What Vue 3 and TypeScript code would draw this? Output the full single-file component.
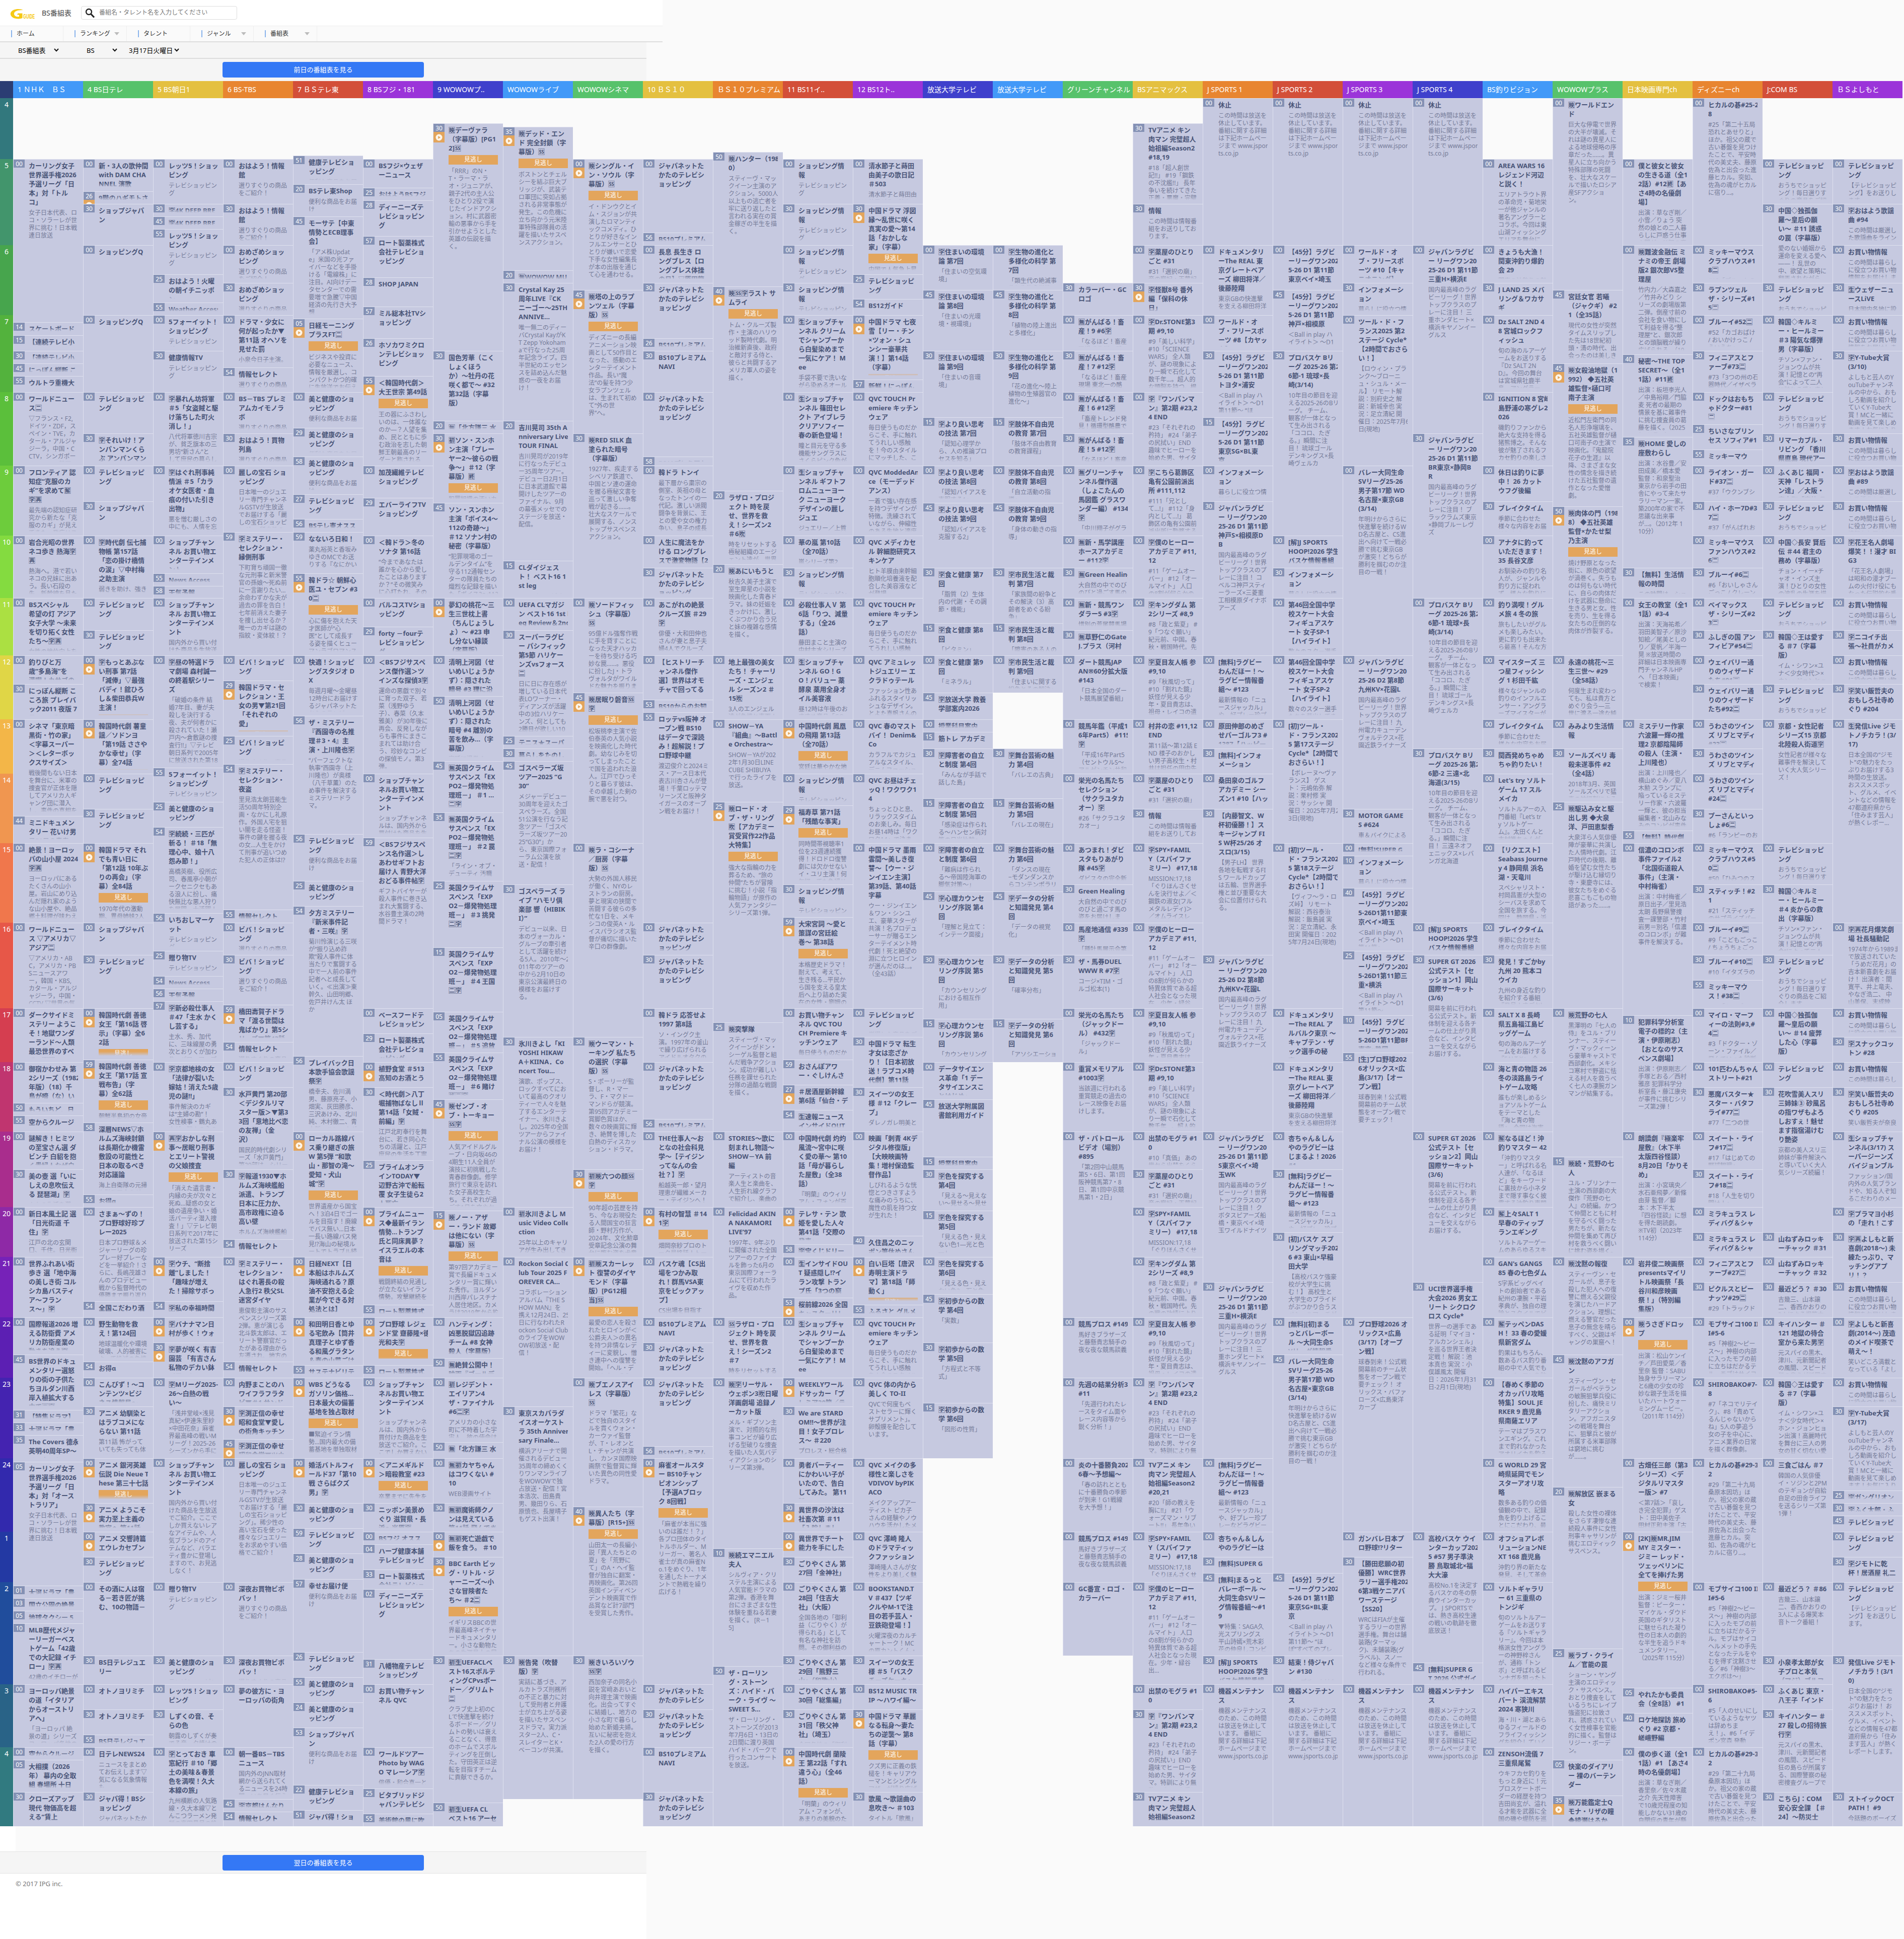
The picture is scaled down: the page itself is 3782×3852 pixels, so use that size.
<script setup lang="ts">
interface Program {
  time: string
  minute: string
  play: boolean
  missed: boolean
  title: string
  desc: string
  height: number
}
interface Channel {
  name: string
  color: string
  programs: Program[]
}

const END = 'end'

// Vertical position of every minute mark on the time axis (shared by all channels).
const axis = `4:00 195 4:30 245 4:35 252 4:50 302 4:51 309
5:00 316 5:20 366 5:25 373 5:26 380 5:28 398 5:30 405 5:45 430 5:55 455 5:56 462 5:57 469
6:00 487 6:20 537 6:25 545 6:28 551 6:30 562 6:40 569 6:45 576 6:54 594 6:55 601 6:57 609
7:00 626 7:05 633 7:14 640 7:15 666 7:26 672 7:30 697 7:40 704 7:45 722 7:54 730 7:55 747 7:57 754
8:00 779 8:15 829 8:20 836 8:25 843 8:29 850 8:30 861 8:35 868 8:55 893 8:58 907
9:00 925 9:20 975 9:27 982 9:29 989 9:30 996 9:45 999 9:50 1006 9:56 1031 9:59 1057
10:00 1064 10:15 1114 10:20 1121 10:30 1128 10:55 1139 10:58 1164
11:00 1188 11:15 1238 11:29 1245 11:30 1252
12:00 1302 12:29 1352 12:30 1359 12:45 1376 12:50 1383 12:53 1390 12:55 1415 12:56 1422
13:00 1429 13:15 1454 13:25 1462 13:30 1487 13:45 1512 13:54 1518 13:55 1525
14:00 1537 14:15 1586 14:25 1593 14:29 1600 14:30 1607 14:35 1614 14:44 1621 14:54 1643 14:55 1650 14:56 1657 14:59 1664
15:00 1675 15:10 1700 15:25 1750 15:30 1757 15:40 1764 15:45 1771 15:54 1800 15:55 1807 15:56 1814 15:59 1822
16:00 1833 16:15 1882 16:25 1889 16:30 1897 16:54 1939 16:55 1947 16:56 1964 16:57 1989 16:59 1996
17:00 2003 17:05 2010 17:10 2017 17:15 2024 17:25 2031 17:29 2053 17:30 2060 17:54 2070 17:55 2091 17:56 2098 17:59 2105
18:00 2110 18:27 2155 18:30 2160 18:45 2184 18:50 2191 18:54 2205 18:55 2216 18:56 2223 18:58 2230
19:00 2248 19:15 2298 19:25 2305 19:30 2323 19:55 2373
20:00 2398 20:15 2405 20:30 2448 20:40 2455 20:54 2462 20:58 2472
21:00 2497 21:30 2547 21:45 2571 21:53 2578 21:54 2585 21:55 2592
22:00 2617 22:30 2667 22:45 2691 22:50 2698 22:54 2705 22:55 2712
23:00 2737 23:15 2787 23:30 2794 23:31 2801 23:33 2826 23:35 2851 23:45 2859 23:50 2865 23:56 2873
24:00 2897 24:05 2904 24:20 2954 24:25 2961 24:30 2986 24:40 2993 24:45 3011 24:59 3036
25:00 3043 25:04 3068 25:10 3076 25:28 3086 25:30 3093 25:33 3118 25:45 3125 25:57 3137
26:00 3143 26:01 3150 26:02 3157 26:03 3175 26:05 3200 26:10 3225 26:25 3275 26:26 3282 26:30 3289 26:31 3296 26:45 3303 26:50 3310 26:55 3332
27:00 3346 27:05 3353 27:24 3382 27:30 3396 27:40 3403 27:53 3432 27:55 3446
28:00 3471 28:05 3496 28:22 3546 28:25 3553 28:30 3560 28:35 3567 28:45 3574 28:50 3581 28:51 3596 28:54 3599 28:55 3603
end 3628`

const marks: Record<string, number> = {}
const tokens = axis.split(/\s+/)
for (let i = 0; i < tokens.length; i += 2) marks[tokens[i]] = Number(tokens[i + 1])

const palette = ['#4299f8', '#57c26b', '#e4c040', '#e88530', '#d34f39', '#9b34d9', '#3f40cc']
const hourColors = [
  '#32787d', '#42956c', '#47a54d', '#53b23d', '#5bbf3b', '#6dcc3c', '#84db40', '#abe042', '#e0d646',
  '#f3b648', '#f09650', '#f0774c', '#e75748', '#d53e50', '#c0356f', '#a92d8d', '#8e29a6', '#7622b8',
  '#5c1fb3', '#4423b0', '#3229ad', '#2339a3', '#204d9c', '#296387', '#317a80',
]
const hours = hourColors.map((color, i) => {
  const from = marks[`${i + 4}:00`]
  const to = i === 24 ? marks[END] : marks[`${i + 5}:00`]
  return { label: i + 4 > 24 ? i - 20 : i + 4, color, height: to - from }
})

// One programme per line: time[flag]~title~description, with ^ as a line break.
// Flag * = play mark, + = play mark and catch-up label, - = no programme.
const SHOP = 'テレビショッピ^ング'
const source: [string, string][] = [
  ['1 ＮＨＫ　ＢＳ', `5:00~カーリング女子^世界選手権2026^予選リーグ「日^本」対「トル^コ」~女子日本代表、ロ^コ・ソラーレが世^界に挑む！日本戦^連日放送
7:14~スケートボード
7:15~【連続テレビ小
7:30~【連続テレビ小
7:45~にっぽん縦断 こ
7:55~ウルトラ重機大
8:00~ワールドニュー^ス🈔~▽フランス・F2,^ドイツ・ZDF，ス^ペイン・TVE，カ^タール・アルジャ^ジーラ，中国・C^CTV，シンガポー^ル・CNA，韓国・
9:00~フロンティア 認^知症“克服のカ^ギ”を求めて🈖^🈑🈞~最先端の認知症研^究から新たな「克^服のカギ」が見え^てきた。発症リス
10:00~岩合光昭の世界^ネコ歩き 熱海🈑^🈞~熱海へ。港で若い^ネコの兄妹に出あ^う。長い石段の^先、新幹線を見た
11:00~BSスペシャル^希望の灯 アジア^女子大学 〜未来^を切り拓く女性^たち〜🈑🈞~女性の地位向上を
12:00~釣りびと万^歳“多島海”を^満喫！カサゴの
12:30~にっぽん縦断 こ^ころ旅 プレイバ^ック2011 夜版 7^月7日の手紙
13:00~シネマ「東京暗^黒街・竹の家」^＜字幕スーパー^＞＜レターボッ^クスサイズ＞~戦後間もない日本^を舞台に、米軍の^捜査官が正体を隠^してアメリカ人ギ^ャング団に潜入^し、事件の真相を
14:44~ミニドキュメン^タリー 花いけ男^子50日の青春
15:00~絶景！ヨーロッ^パの山小屋 2024^🈑🈞~ヨーロッパにある^たくさんの山小^屋。岩山にめり込^んだ隠れ家のよう^な山小屋や、絶品^郷土料理が味わえ
16:00~ワールドニュー^ス ▽アメリカ▽^アジア🈔~▽アメリカ・AB^C，アメリカ・PB^Sニュースアワ^ー，韓国・KBS,^カタール・アルジ^ャジーラ，中国・^CCTV ▽世界の気
17:00~ダークサイドミ^ステリー ようこ^そ！地獄ワンダ^ーランド〜人類^最恐世界のすべ^て〜🈑🈞
18:00~御宿かわせみ 第^2シリーズ（1982^年版）（18）千^鳥が啼（な）い
18:50~もういちど、日
18:55~空からクルージ
19:00~謎解き！ヒミツ^の至宝さん選 ダ^ビンチ 白貂を抱^く貴婦人なぜ白
19:30~美の壺 選「いに^しえの息吹伝え^る 琵琶湖」🈑~人々の生活を潤
20:00~新日本風土記 選^「日光街道 千^住」🈑~江戸の北の玄関^口、千住。日光街
21:00~世界ふれあい街^歩き 選「地中海^の美しき街 コル^シカ島バスティ^ア〜フラン^ス〜」🈑
22:00~国際報道2026 増^える防衛費 アメ^リカ防衛産業の^動きを追う🈑
22:45~BS世界のドキュ^メンタリー選怒^りの街の子供た^ちヨルダン川西^岸入植拡大する^中で🈔🈑
23:31~【特集ドラマ】
23:33~大河ドラマ「豊
23:35~The Covers 德永^英明40周年SP〜^ノーカット
24:05~カーリング女子^世界選手権2026^予選リーグ「日^本」対「オース^トラリア」~女子日本代表、ロ^コ・ソラーレが世^界に挑む！日本戦^連日放送
26:01~大河ドラマ「豊
26:03~国立公園の絶景
26:05~地球タクシー 5
26:10~MLB歴代メジャ^ーリーガーベス^トゲーム「42歳^での大記録 イチ^ロー」🈑🈞~42歳のイチローが
27:00~ヨーロッパ絶景^の道「イタリア^からオーストリ^アへ」~「ヨーロッパ 絶^景の道」シリーズ^ヨーロッパ各地の
28:00~空からクルージ
28:05~大相撲（2026^年） 幕内の全取^組 春場所 十日
28:30~クローズアップ^現代 物価高を超^える“賃上`],
  ['4 BS日テレ', `5:00~新・3人の歌仲間^with DAM CHA^NNEL 演歌
5:26*~9階のハギモトさ
5:30~ショップジャパ^ン
6:00~ショッピングQ
7:00~ショッピングQ
8:00~${SHOP}
8:30~🈑それいけ！ア^ンパンマンくら^ぶ アンパンマン
9:00~${SHOP}
9:30~ショップジャパ^ン
10:00~🈑時代劇 伝七捕^物帳 第157話^「恋の掛け橋情^の涙」▽中村梅^之助主演~弱きを助け、強き
11:00~${SHOP}
11:30~${SHOP}
12:00+~🈑もっとあぶな^い刑事 第7話^「減俸」▽最強^バディ！舘ひろ^し＆柴田恭兵W^主演！
13:00+~韓国時代劇 薯童^謡／ソドンヨ^「第19話 ささや^かな幸せ」（字^幕）全74話
14:00~${SHOP}
14:30~${SHOP}
15:00+~韓国ドラマ それ^でも青い日に^「第12話 10年ぶ^りの再会」（字^幕）全84話~1970年代の激動^期、異母姉妹2人
16:00~ショップジャパ^ン
16:30~${SHOP}
17:00+~韓国時代劇 善徳^女王「第16話 啓^示」（字幕）全6^2話
17:59+~韓国時代劇 善徳^女王「第17話 宣^戦布告」（字^幕）全62話~朝鮮半島初の女帝
18:58~深層NEWS▽ホ^ルムズ海峡封鎖^は長期化か機雷^敷設の可能性と^日本の取るべき^対応議論~海上自衛隊の元掃^海隊群司令らが
19:55~お得α
20:00~さまぁ〜ずの！^プロ野球好珍プ^レー2025~日本プロ野球＆メ^ジャーリーグの珍^プレー好プレーな^どを一挙紹介！さ^らに、長嶋茂雄さ^んのプロデビュー^戦から監督時代の^優勝まで振り返り
21:54~全国こだわり酒
22:00~野生動物を救^え！第124回~地球温暖化や環境^破壊、人的被害に^よって絶滅の危機
22:54~お得α
23:00~こんびず！〜コ^ンテンツ×ビジ^ネス情報局〜
23:30~アニメ 幼馴染と^はラブコメにな^らない 第11話~第11話 怖がって^いても失っても体^が覚えてる
24:00+~アニメ 銀河英雄^伝説 Die Neue T^hese 第三十七話
24:30*~アニメ ようこそ^実力至上主義の^教室へ 第11話
25:00*~アニメ 交響詩篇^エウレカセブン
25:30~${SHOP}
26:00~その酒に人は宿^る－若き匠が挑^む、10の物語－
26:30~BS日テレジュエ^リー
27:00~オトノヨリミチ
27:30~オトノヨリミチ
27:55~BS日テレジュエ
28:00~日テレNEWS24~ニュースをまとめ^てお伝えします▽^気になる気象情報^も
28:30~ジャパ得！BSシ^ョッピング~ジャパネットたか`],
  ['5 BS朝日1', `5:00~レッツ5！ショッ^ピング~テレビショッピン^グ
5:30~🈑4K DEEP BRE
5:45~🈑4K DEEP BRE
5:55~レッツ5！ショッ^ピング~テレビショッピン^グ
6:25~おはよう！火曜^の朝イチニッポ^ン
6:55~Weather Access
7:00~5フォーイット！^ショッピング~テレビショッピン^グ
7:30~健康情報TV~テレビショッピン^グ
8:00~🈑暴れん坊将軍^＃5「女盗賊と駆^け落ちした町火^消し！」~八代将軍徳川吉宗^が、貧乏旗本の三^男坊“新さん”と^して庶民の暮らし
9:00~🈑はぐれ刑事純^情派 ＃5「カラ^オケ女医者・血^痕の付いた引き^出物」~悪を憎む厳しさの^中にも、人情を忘^れない刑事・安浦
10:00~ショップチャン^ネル お買い物エ^ンターテインメ^ント
10:55~News Access
10:58~天気予報
11:00~ショップチャン^ネル お買い物エ^ンターテインメ^ント~国内外から買い付^けた商品を生放送
12:00~🈑昼の特選ドラ^マ劇場 森村誠一^の終着駅シリー^ズ~「破婚の条件 結^婚7年目、妻が夫^殺しを決行する^夜、夫が何者かに^殺されていた！瀬^戸内〜倉敷謎の捜^査行!!」▽テレビ^朝日系列で2005年^に放送された第18
13:55~5フォーイット！^ショッピング~テレビショッピン^グ
14:25~美と健康のショ^ッピング
14:54~🈑続続・三匹が^斬る！ ＃18「無^理心中、娘十八^怨み節！」~高橋英樹、役所広^司、春風亭小朝が^ークセニクセもあ^る浪人に扮し、痛^快無比な悪人狩り^を展開。大活躍！
15:56~いちおしマーケ^ット~テレビショッピン^グ
16:25~贈り物TV~テレビショッピン
16:54~News Access
16:56~天気予報
16:57~🈑新必殺仕事人^＃47「主水 かく^し芸する」~主水、秀、加代^に、三味線屋の勇^次とおりくが加わ^り、パワーアップ
18:00~🈑京都地検の女^「法律が裂いた^嫁姑！消えた5歳^児の謎!!」~事件解決のカギ^は“主婦の勘”！^女性検事・鶴丸あ^やが、犯人の心の
19:00+~🈞🈑おかしな刑^事〜居眠り刑事^とエリート警視^の父娘捜査~「消えた遺言書・^内縁の夫が次々と^死ぬ…疑惑の女と^娘の遺産争い・婚^活パーティ潜入捜^査！」▽テレビ朝^日系列で2017年に^放送された第15シ^リーズ
21:00*~🈑ウチ、“断捨^離”しました！^「趣味が増え^た！掃除サボっ^ちゃう…」
21:54~🈑私の幸福時間
22:00*~🈑バナナマン日^村が歩く！ウォ^ーキング
22:30*~🈑夢が咲く 有吉^園芸 「有吉さん^私物のデカい鉢^が届いた」
23:00~🈑Mリーグ2025-^26〜白熱の戦^い〜~「浅井堂岐×浅見^真紀×伊達朱里紗^×中田花奈」麻雀^界最高峰の戦いM^リーグ！2025-26^シーズンから手に
24:00~ショップチャン^ネル お買い物エ^ンターテインメ^ント~国内外から買い付^けた商品を生放送^でご紹介。ここで^しか買えないレア^なアイテムや、人^気ブランドのアイ^テムなど、バラエ^ティ豊かに登場し^ますので、お見逃^しなく！
26:00~贈り物TV~テレビショッピン^グ
26:30~美と健康のショ^ッピング~テレビショッピン
27:00~レッツ5！ショッ^ピング
27:30~しずくの音、そ^らの色~朝露のしずくが奏^でる音、夕焼けの
28:00~🈑とっておき 車^窓紀行 ＃10「郷^土の美味＆春景^色を満喫！久大^本線の旅」~九州横断の人気路^線・久大本線▽と^んこつラーメン発^祥の高田具見の絶`],
  ['6 BS-TBS', `5:00~おはよう！情報^館~選りすぐりの商品^をご紹介！
5:30~おはよう！情報^館~選りすぐりの商品^をご紹介！
6:00~おめざめショッ^ピング~選りすぐりの商品^をご紹介！
6:30~おめざめショッ^ピング~選りすぐりの商品
7:00~ドラマ・少女に^何が起ったか▼^第11話 オヘソを^見せた罰~小泉今日子主演。
7:54~情報セレクト~選りすぐりの商品
8:00~BS－TBS プレミ^アムカイモノラ^ボ~選りすぐりの商品
8:30~おはよう！買物^列島~選りすぐりの商品
9:00~麗しの宝石 ショ^ッピング~日本唯一のジュエ^リー専門チャンネ^ルGSTVが生放送^でお届けする「麗^しの宝石ショッピ^ング」。稀少性の
9:59~🈑ミステリー・^セレクション・^縁側刑事~下町育ち頑固一徹^な元刑事と新米警^官の孫娘〜死ぬ前^に一言謝りたい…^余命わずかな夫が^過去の罪を告白！^七年前消えた妻子^を捜し出せるか？^唯一のカギは謎の^指紋・変体紋！？
12:00~ビバ！ショッピ^ング
12:29+~韓国ドラマ・セ^レクション・王^女の男▼第21回^「それぞれの^愛」
13:25~ビバ！ショッピ^ング~選りすぐりの商品
13:54~🈑ミステリー・^セレクション・^夜盗~里見浩太朗芸能生^活50周年特別企^画・なかにし礼原^作。外国人宅を狙^い闇を走る怪盗！^事件の鍵を握る夜^の女…人生をかけ^て刑事が追いつめ^た犯人の正体は!?
15:55~情報セレクト
16:00~ビバ！ショッピ^ング~選りすぐりの商品
16:30~ビバ！ショッピ^ング~選りすぐりの商品^をご紹介！
16:59*~橋田壽賀子ドラ^マ「渡る世間は^鬼ばかり」第5シ^リーズ▼第43話
17:54~情報セレクト~選りすぐりの商品
18:00~ビバ！ショッピ^ング
18:30~水戸黄門 第20部^＜デジタルリマ^スター版＞▼第3^3回「意地比べ恋^の友禅」（金^沢）~国民的時代劇シリ^ーズ「水戸黄門」^第20部は、シリー
19:30~🈑報道1930▼ホ^ルムズ海峡艦船^派遣、トランプ^日本に圧力か、^高市政権に迫る^高い壁~ホルムズ海峡艦船
20:54~情報セレクト
21:00~🈑ミステリー・^セレクション・^はぐれ署長の殺^人急行2 秩父SL^迷宮ダイヤ~恵俊彰主演のサス^ペンスシリーズ第^2弾。恵が演じる^北斗鉄太郎は、エ^リート警察官だっ^たがある理由から^左遷され、地方の
22:54~情報セレクト
23:00~内野まことのハ^ワイフラフラタ^ビ▼＃1 サンド
23:30*~🈑渕正信の幸せ^昭和食堂▼愛し^の街角キッチン
23:45*~🈑渕正信の幸せ^昭和食堂▼ツウ
24:00~麗しの宝石 ショ^ッピング~日本唯一のジュエ^リー専門チャンネ^ルGSTVが生放送^でお届けする「麗^しの宝石ショッピ^ング」。稀少性の^高い宝石を使った^様々なジュエリー^をお求めやすい価^格でご紹介！
26:00~深夜お買物ビボ^バッ！~選りすぐりの商品^をご紹介！
26:30~深夜お買物ビボ^バッ！~選りすぐりの商品
27:00~夢の彼方に・ヨ^ーロッパの街角
28:00~朝一番BS－TBS^ニュース~国内外のJNN取材^網から送られてく^るニュースを24時^間、いち早く伝え
28:45~🈑京都はんなり
28:54~情報セレクト`],
  ['7 ＢＳテレ東', `4:51~健康テレビショ^ッピング~便利な商品をお届
5:20~BSテレ東Shop~便利な商品をお届^け
5:45~モーサテ【中東^情勢とECB理事^会】~「アメ株Updat^e」米国の光ファ^イバーなどを手掛^ける「電線株」に^注目。AI向けデー^タセンターでの需^要増で急騰▽中国^経済の先行き大予^想
7:05+~日経モーニング^プラスFT🈔~ビジネスや投資に^必要なニュース、^情報を厳選し、コ^ンパクトかつ的確^に生放送でお伝え
8:00~美と健康のショ^ッピング~便利な商品をお届^け
8:29~美と健康のショ^ッピング~便利な商品をお届
8:58~美と健康のショ^ッピング~便利な商品をお届^け
9:27~${SHOP}
9:56~BSテレ東オスス
9:59~なないろ日和！~薬丸裕英と香坂み^ゆきのMCでお送^りする『なにかい
10:55+~韓ドラ☆ 朝鮮心^医ユ・セプン #3^0🈔~心に傷を抱えた天^才医師が“心^医”として成長す^る姿を描くヒュー^マンラブロマンス
12:00~快適！ショッピ^ングスタジオ D^X~毎週月曜〜金曜昼^12時台にお届けす^るジャパネットた^かたのテレビ
12:56~ザ・ミステリー^『西園寺の名推^理＃3・4』主^演・上川隆也🈑~“パーフェクトな^執事”西園寺（上^川隆也）が奥様^（八千草薫）のた^め事件を解決する^ミステリードラ^マ。
14:56~${SHOP}~便利な商品をお届^け
15:25~美と健康のショ^ッピング
15:54~夕方ミステリー^『新米事件記^者・三咲』🈑~菊川怜演じる三咲^が“振り込め詐^欺”殺人事件に体^当たりで奮闘する^中で一人前の事件^記者へと成長して^いく。≪出演≫東^幹久、山田明郷、^佐戸井けん太 ほ^か
17:56~プレイバック日^本歌手協会歌謡^祭🈑~橋幸夫、佐川満^男、藤原亮子、小^畑実、灰田勝彦、^三沢あけみ、北川^純、木村徹二、青^山新、ハン・ウギ
19:00+~ローカル路線バ^ス乗り継ぎの旅^W 第5弾 “和歌^山・那智の滝〜^愛知・犬山^城”🈑~世界遺産から国宝^へ！3泊4日でゴー^ルを目指す！廃線^でバス無い…日本^一長い路線バス発^見!?海山の秘境ル^ートでトラブル続
21:00*~日経NEXT【日^本船はホルムズ^海峡通れる？原^油不安抱える企^業が今できる対^処法とは】
22:00*~和田明日香とゆ^る宅飲み【筒井^真理子とゆず香^る和風グラタン^＆春の山菜ごは
22:55~サステナビリテ
23:00+~WBS どうなる^ガソリン価格…^日本最大の備蓄^基地を独占取材~■緊迫イラン情^勢…国内最大の備^蓄基地を単独取材
24:00*~婚活バトルフィ^ールド37「第10^戦 さらばクズ^男」🈑
24:30~美と健康のショ^ッピング
24:59~${SHOP}
25:28~美と健康のショ^ッピング
25:57~幸せお届け便~便利な商品をお届^け
26:26~${SHOP}
26:55~美と健康のショ^ッピング
27:24~美と健康のショ^ッピング
27:53~ショップジャパ^ン~便利な商品をお届^け
28:22~健康テレビショ^ッピング
28:51~ジャパ得！ショ`],
  ['8 BSフジ・181', `5:00~BSフジ×ウェザ^ーニュース
5:25~おはようBSフジ
5:28~ディーニーズテ^レビショッピン^グ
5:57~ロート製薬株式^会社テレビショ^ッピング
6:28~SHOP JAPAN
6:57~ミル総本社TVシ^ョッピング
7:26~ホソカワミクロ^ンテレビショッ^ピング
7:55+~＜韓国時代劇＞^大王世宗 第49話~王の器にふさわし^いのは、一体誰な^のか―？人望を集^め、民とともに歩^む政治を志した朝^鮮王朝最高のリー^ダーと称される
9:00~加茂繊維テレビ^ショッピング
9:29~エバーライフTV^ショッピング
10:00~＜韓ドラ＞冬の^ソナタ 第16話~“今まであなたは^誰かを心から愛し^たことはあります^か？”その微笑み^に心打たれ、その
11:00~バルコスTVショ^ッピング
11:29~forty －fourテ^レビショッピン^グ
12:00~＜BSフジサスペ^ンス傑作選＞ツ^インズな探偵3🈑~運命の悪戯で別々^に育った双子、若^菜（浅野ゆう^子）、春菜（久本^雅美）が30年後に^再会、反発しなが^らも事件にまきこ^まれては助け合^う、珍妙なコンビ^の探偵モノ。第3^弾。
14:00~ショップチャン^ネルお買い物エ^ンターテインメ^ント~ショップチャンネ^ルは、国内外から^買付けた商品を生
14:59~＜BSフジサスペ^ンス名作選＞し^あわせギフトお^届け人 青野大洋^おどる事件帖🈑~ギフトバイヤーが^殺人事件に巻き込^まれ大奮闘する、^水谷豊主演の2時^間ドラマ！
17:00~ベースフードテ^レビショッピン^グ
17:29~ロート製薬株式^会社テレビショ^ッピング
18:00*~植野食堂 ＃513^高知のお酒とう
18:30~＜時代劇＞八丁^堀捕物ばなしⅡ^第14話「女賊・^前編」🈑~江戸北町奉行を舞^台に、若き同心た^ちの活躍と、江戸^庶民の生活を丁寧
19:25~プライムオンラ^インTODAY▼^辺野古沖で船転^覆 女子生徒ら2^人死亡
20:00+~プライムニュー^ス◆最新イラン^情勢…トランプ^氏と同床異夢？^イスラエルの本^音は~戦闘終結の見通し^が立たないイラン^情勢。攻撃継続を
21:55~ロート製薬株式
22:00+~プロ野球 レジェ^ンド堂 齋藤隆×徳^光和夫🈑
22:55~ロート製薬株式
23:00~ショップチャン^ネルお買い物エ^ンターテインメ^ント~ショップチャンネ^ルは、国内外から^買付けた商品を生^放送でご紹介。こ^こでしか買えない
24:00+~＜アニメギルド^＞暗殺教室 #23~卒業までに先生を
24:30~ニッポン美景め^ぐり 滋賀県・長^浜〜米原🈑
25:00~BSフジ オスス
25:04~ハーブ健康本舗^テレビショッピ
25:33~ロート製薬株式^会社テレビショ
26:02~ディーニーズテ^レビショッピン^グ
26:31~八幡物産テレビ^ショッピング
27:00~お買い物チャン^ネル QVC
28:00~ワールドツアー^Photo by WAG^O マレーシア🈑~俳優・和合真一と
28:25~ビタブリッドジ^ャパンテレビシ^ョッピング
28:55~美術館の風に吹`],
  ['9 WOWOWプ..', `4:30+~🈙デーヴァラ^（字幕版）[PG1^2]🅍~「RRR」のN・^T・ラーマ・ラ^オ・ジュニアが、^親子2代の主人公^をひとり2役で演^じたインドアクシ^ョン。村に武器密^輸の悪事から手を^引かせようとした^英雄の伝説を描^く。
7:30~国色芳華（こく^しょくほう^か）〜牡丹の花^咲く都で〜 #32^第32話（字幕^版）
8:20~🈚「北方謙三 水
8:30+~🈠ソン・スンホ^ン主演「プレー^ヤー2〜彼らの戦^争〜」＃12（字^幕版）🈡~犯罪組織の汚いカ
9:45~ソン・スンホン^主演「ボイス4〜^112の奇跡〜」^＃12 ソナン村の^秘密（字幕版）~“犯罪現場のゴー^ルデンタイム”を^守る112通報セン^ターの隊員たちの^熾烈な記録を描い^た「ボイス2〜112
11:00*~夢幻の桃花〜三^生三世枕上書^（ちんじょうし^ょ）〜 #23 申^し分ない縁談^（字幕版）
12:00~清明上河図（せ^いめいじょうか^ず）：隠された^暗号 #3 理に沿
12:50~清明上河図（せ^いめいじょうか^ず）：隠された^暗号 #4 離別の^苦を飲み…（字^幕版）~宮廷に渦巻く
13:45~🈚英国クライム^サスペンス「EX^PO2－爆発物処^理班－」 ＃1 …^🈔🈑
14:35~🈚英国クライム^サスペンス「EX^PO2－爆発物処^理班－」 ＃2 罠^🈔🈑~「ライン・オブ・^デューティ 汚職
15:25~英国クライムサ^スペンス「EXP^O2－爆発物処理^班－」 ＃3 挑発^🈔🈑
16:15~英国クライムサ^スペンス「EXP^O2－爆発物処理^班－」 ＃4 王国^🈔🈑
17:05~英国クライムサ^スペンス「EXP^O2－爆発物処理^班－」 ＃5 追放^🈔🈑
17:55~英国クライムサ^スペンス「EXP^O2－爆発物処理^班－」 ＃6 賭け^🈡🈔🈑
18:45+~🈙ゼンブ・オ^ブ・トーキョー^🅍🈑~人気アイドルグル^ープ・日向坂46の^4期生11人全員が^演技に初挑戦した^青春群像劇。修学^旅行で東京を訪れ^た女子高校生た^ち。それぞれが過^ごす1日を爽やか
20:15+~🈙ノー・アザ^ー・ランド 故郷^は他にない（字^幕版）🅍~第97回アカデミー^賞で長編ドキュメ^ンタリー賞に輝い^た秀作。ヨルダン^川西岸パレスチナ^人居住地区。カメ^ラは2019年から約
22:00~ハンティング：^凶悪脱獄囚追跡^チーム #8 女神^殺人（字幕版）
22:50~🈚絶賛公開中！^映画『ゴールデ
23:00~🈠レジデント・^エイリアン4^ザ・ファイナル^#6🈔🈑~アメリカの小さな^町に不時着した宇^宙人。彼の使命は
23:50~🈚「北方謙三 水
24:00~🈚🈠カヤちゃん^はコワくない #^10~WEB漫画サイト^で人気作が待望の
24:30~🈚🈠魔術師クノ^ンは見えている^第11話 飛んで炎
25:00*~🈚🈠死亡遊戯で^飯を食う。 ＃10
25:30+~BBC Earth ビッ^グ・リトル・ジ^ャーニーズ〜小^さな冒険者た^ち〜 ＃2🈔~イギリスBBCの世^界最高峰ネイチャ^ードキュメンタリ^ー。小さな動物た^ちの生涯最大の冒
26:30~🈠🈢UEFACLベ^スト16スポルテ^ィングCPvsボー^ドー／グリムト^🈔~クラブ史上初のC^Lで快進撃を続け^るボードー／グリ^ムトの勢いは衰え^ることなく、得意^のホームでスポル^ティングを圧倒し^た。守田英正は逆^転を目指すチーム^に貢献できるか。
28:50~🈠🈢UEFA CL^ベスト16 アーセ`],
  ['WOWOWライブ', `4:35+~🈙デッド・エン^ド 完全封鎖（字^幕版）🅍~ボストンとチェル^シーを結ぶ巨大ブ^リッジが、武装テ^ロ軍団に突如占拠^される非常事態が^発生。この危機に^立ち向かう元米陸^軍特殊部隊員の活^躍を描いたサスペ^ンスアクション。
6:20~🈚WOWOW MU
6:30~Crystal Kay 25^周年LIVE『CK^ニーゴー〜25TH^ANNIVE…~唯一無二のディー^バCrystal KayがK^T Zepp Yokoham^aで行なった25周^年記念ライブ。四^半世紀のエッセン^スを詰め込んだ魅^惑の一夜をお届^け！
8:20~吉川晃司 35th A^nniversary Live^TOUR FINAL~吉川晃司が2019年^に行なったデビュ^ー35周年ツアー。^デビュー日2月1日^に日本武道館で幕^開けしたツアーの^ファイナル、9月^の幕張メッセでの^ステージを放送・^配信。
10:15~CLダイジェス^ト！ ベスト16 1^st leg~UEFAチャンピオ
11:00~UEFA CLマガジ^ン ベスト16 1st l^eg Review＆2nd
11:30~スーパーラグビ^ー パシフィック^第5節 ハリケー^ンズvsフォース^🈔~日に日に存在感が^増している日本代^表LOワーナー・^ディアンズが活躍^中の3位ハリケー^ンズ、何としても^2勝目が欲しい10
13:25~テニス★スーパ
13:30~暮らしをたのし
13:45~ゴスペラーズ坂^ツアー2025 “G^30”~メジャーデビュー^30周年を迎えたゴ^スペラーズ。全国^51公演を行なう記^念ツアー「ゴスペ^ラーズ坂ツアー20^25“G30”」か^ら、東京国際フォ^ーラム公演を放^送・配信！
15:30~ゴスペラーズ ラ^イブ “ハモリ倶^楽部 響（HIBIK^I）”~デビュー以来、日^本のヴォーカル・^グループの牽引者^として活躍を続け^る5人。2010年〜2^011年のツアーの^中から2月10日の^東京公演最終日の^模様をお届けす^る。
17:30~氷川きよし「KI^YOSHI HIKAW^A＋KIINA．Co^ncert Tou…~演歌、ポップス、^ロックすべてにお^いて最高のクオリ^ティーで人々を魅^了するエンターテ^イナー、氷川きよ^し。2025年の全国^ツアーからファイ^ナル公演の模様を^お届け！
20:00~🈠氷川きよし M^usic Video Colle^ction~25年以上のキャリ^アが生み出してき
21:00~Rockon Social C^lub Tour 2025 F^OREVER CA…~コラボレーション^アルバム『THE S^HOW MAN』を^携え12月24日、25^日に行なわれたR^ockon Social Club^のライブをWOW^OW初放送・配^信！
23:30~東京スカパラダ^イスオーケスト^ラ 35th Anniver^sary Finale…~横浜アリーナで開^催されるデビュー^35周年の締めくく^りワンマンライブ^をWOWOWで独^占放送・配信！宮^本浩次、田島貴^男、幾田りら、石^原慎也、長屋晴子^もゲスト出演！
26:30~🈙告発（吹替^版）🈑~実話に基づき、ア^ルカトラズ刑務所^の不正と暴力に対^して受刑者と弁護^士が立ち上がる姿^を描いたサスペン^スドラマ。実力派^スター2人、C・^スレイターとK・^ベーコンが共演。
28:45-~`],
  ['WOWOWシネマ', `5:00+~🈙シングル・イ^ン・ソウル（字^幕版）🅍~イ・ドンウクとイ^ム・スジョンが共^演したロマンティ^ックコメディ。ひ^とりが好きなイン^フルエンサーとひ^とりが嫌いで恋愛^下手な女性編集長^が本の出版を通じ^て心を通わせる。
6:45+~🈙塔の上のラプ^ンツェル（字幕^版）🅍~ディズニーの長編^アニメーション映^画として50作目と^なった、感動のエ^ンターテイメント^作品。長い“魔^法”の髪を持つ少^女ラプンツェル^は、生まれて初め^て“外の世^界”へ。
8:30~🈙RED SILK 血^塗られた暗号^（字幕版）~1927年、疾走する^シベリア鉄道で、^中国とソ連の運命^を握る極秘文書を^巡って激しい争奪^戦が起きる……。^壮大なスケールで^展開する、ノンス^トップサスペンス^アクション。
11:00~🈙ソードフィッ^シュ（字幕版）^🅍~95億ドル強奪作戦^に手を貸すことに^なった天才ハッカ^ーを待ち受ける巧^妙な罠……。悪役^に扮したJ・トラ^ヴォルタがワイル^ドな魅力を振りま
12:45+~🈙居眠り磐音🅍^🈑~松坂桃李主演で佐^伯泰英の人気小説^を映画化した時代^劇。幼なじみを切^ってしまったこと^で国を追われた浪^人。江戸でひっそ^りと暮らす彼は、^その卓越した剣の^腕で悪を討つ。
15:00~🈙ラ・コシーナ^／厨房（字幕^版）🅍~大勢の外国人移民^が働く、NYのレ^ストランの厨房。^夢と現実の狭間で^苦闘する彼らの多^忙な1日を、メキ^シコの俊英A・ル^イスパラシオス監^督が痛切に描いた^辛口の群像劇。
17:30~🈙ウーマン・ト^ーキング 私たち^の選択（字幕^版）🅍~S・ポーリーが監^督し、R・マー^ラ、F・マクドー^マンドらが競演。^第95回アカデミー^賞脚色賞ほか、^数々の映画賞に輝^き、絶賛を博した^白熱のディスカッ^ション・ドラマ。
19:30+~🈠🈙六つの顔🅍^🈑~90年超の芸歴を持^ち、今なお現役た^る人間国宝の狂言^師・野村万作が、^2024年、文化勲章^受章記念公演の舞^台に臨む姿を犬童
21:00+~🈠🈙スカーレッ^ト 復讐のダイヤ^モンド（字幕^版）[PG12相^当]🅍~最愛の恋人を殺さ^れたヒロインが＜^公爵夫人＞の異名^を持つ非情なレデ^ィーに変貌し、憎^き連中への復讐を^開始。「ヘル・デ^ィセント」のC・
23:00~🈙ブエノスアイ^レス（字幕版）^🅍~ドラマ「繁花」な^どで独自のスタイ^ルを貫くウォン・^カーウァイ監督^が、T・レオンと^L・チャンが共演^し、カンヌ国際映^画祭で監督賞に輝^いた異色の同性愛^ドラマ。
24:40+~🈙異人たち（字^幕版）[R15+]🅍~山田太一の長編小^説「異人たちとの^夏」を「荒野に^て」のA・ヘイ監^督が独自に翻案・^再映画化。第26回^英国インディペン^デント映画賞で作^品賞など計7部門^を受賞した秀作。
26:30~🈙きいろいゾウ^🅍🈑~西加奈子の同名小^説を宮﨑あおいと^向井理主演で映画^化。出会ってすぐ^に結婚し、地方の^小さな町で暮らし^始めた新婚夫婦。^互いに秘密を抱え^た2人の愛の行方^を描く。
28:45-~`],
  ['10 ＢＳ１０', `5:00~ジャパネットた^かたのテレビシ^ョッピング
5:56~BS10プレミアム
6:00~長息 長生き ロ^ングブレス【ロ^ングブレス体操^の日】▽原田龍
6:30~ジャパネットた^かたのテレビシ^ョッピング
7:26~BS10プレミアム
7:30~BS10プレミアム^NAVI
8:00~ジャパネットた^かたのテレビシ^ョッピング
8:58~BS10プレミアム
9:00~韓ドラ トンイ~最下層から粛宗の^側室、英祖の母と^なったトンイの一^代記。激しい派閥^闘争を背景に、王^との愛や女の権力^争い、息子の成長
10:00~人生に魔法をか^ける ロングブレ^スで激変物語【2
10:30~ジャパネットた^かたのテレビシ^ョッピング
11:00~あこがれの絶景^クルーズ旅 ＃29^🈑~俳優・大和田伸也^さんが妻と息子夫^婦4人でクルーズ
12:00~【ヒストリーチ^ャンネル傑作^選】世界はオモ^チャで回ってる
12:53~BS10からのお知
12:55~ロッテvs阪神 オ^ープン戦 BS10^はデータで深読^み！超解説！プ^ロ野球中継~渡辺俊介と2024ミ^ス・アース日本代^表古川杏さんが登^場！千葉ロッテマ^リーンズと阪神タ^イガースのオープ^ン戦をお届け！
16:00~ジャパネットた^かたのテレビシ^ョッピング
16:30~ジャパネットた^かたのテレビシ^ョッピング
17:00~韓ドラ 応答せよ^1997 第8話~ソ・イングク主^演。1997年の釜山^で繰り広げられる^アイドルオタクの
18:00~ジャパネットた^かたのテレビシ^ョッピング
18:56~BS10プレミアム
19:00~THE仕事人〜お^となの社会科見^学〜【テイジン^ってなんの会^社？】🈑~船越英一郎・望月^理恵が繊維メーカ^ー・テイジンへ！
20:00+~有村の智慧 ＃14^1🈑~畑岡奈紗プロのト^ーク最終話！トー
21:00~バスケ魂【CS出^場をつかみ取^れ！群馬VSA東^京をピックアッ^プ】~CS出場を目指す
22:00~BS10プレミアム^NAVI
22:30~ジャパネットた^かたのテレビシ^ョッピング
23:00~ジャパネットた^かたのテレビシ^ョッピング
23:56~BS10プレミアム
24:00+~麻雀オールスタ^ー BS10チャン^ピオンシップ^【予選Aブロッ^ク 8回戦】~「麻雀が本当に強^いのは誰だ！？」^各プロ団体のタイ^トルホルダー、M^リーガー、著名人^雀士が真の麻雀N^o.1をめぐり、1年^を通したトーナメ^ントで熱戦を繰り^広げる！
27:00~ジャパネットた^かたのテレビシ^ョッピング
27:30~ジャパネットた^かたのテレビシ^ョッピング
28:00~BS10プレミアム^NAVI
28:30~ジャパネットた^かたのテレビシ^ョッピング`],
  ['ＢＳ１０プレミアム', `4:50~🈙ハンター（198^0）~スティーヴ・マッ^クイーン主演のア^クション。5000人^以上もの逃亡者を^牢に送り返したと^言われる実在の賞^金稼ぎの半生を描^く。
6:40+~🈙🅍🈑ラスト サ^ムライ~トム・クルーズ製^作・主演のハリウ^ッド製時代劇。明^治維新直後、政府^と敵対する侍と、^彼らと共闘するア^メリカ軍人の姿を^描く。
9:20~ラザロ・プロジ^ェクト 時を戻^せ、世界を救^え！シーズン2^＃6🈥~時をリセットする^極秘組織のエージ^ェント達が、世界
10:20~🈙あにいもうと~秋吉久美子主演で^室生犀星の小説を^映画化した青春ド^ラマ。妹の妊娠を^きっかけに、激し^くぶつかり合う兄^と妹の複雑な感情^を描く。
12:00~地上最強の美女^たち！ チャーリ^ーズ・エンジェ^ル シーズン2 ＃^15🈥~3人のエンジェル^達が危機と直面！
13:00~SHOW－YA^『組曲』〜Battl^e Orchestra〜~SHOW－YAが202^2年1月30日LINE^CUBE SHIBUYA^で行ったライブを^放送。
14:25+~🈙ロード・オ^ブ・ザ・リング^🈥【アカデミー^賞受賞作22作品^大特集】~強大な指輪の力を^葬るため、“旅の^仲間”たちが冒険^に挑む！小説「指^輪物語」が原作の^人気ファンタジー^シリーズ第1弾。
17:25~🈙突撃隊~スティーヴ・マッ^クイーンがドン・^シーゲル監督と組^んだ戦争アクショ^ン。成功が難しい^任務を課せられた^分隊の過酷な戦闘^を描く。
19:00~STORIES〜歌に^刻まれし物語〜^SHOW－YA 前^編~アーティストの音^楽人生と楽曲を、^人生折れ線グラフ^で紹介し、楽曲の
20:00~Felicidad AKIN^A NAKAMORI^LIVE’97~1997年、9年ぶり^に開催された全国^ツアーのファイナ^ルを飾った6月の^東京国際フォーラ^ムにて行われたラ^イヴを収めた作^品。
22:00~🅍ラザロ・プロ^ジェクト 時を戻^せ、世界を救^え！シーズン2^＃7~時をリセットする
23:00~🈙🈑リーサル・^ウェポン3🈥日曜^洋画劇場 追録ノ^ーカット版~メル・ギブソン主^演で、対照的な刑^事コンビが繰り広^げる型破りな捜査^を描いた人気バデ^ィアクションのシ^リーズ第3弾。
25:10~🈙続エマニエル^夫人~シルヴィア・クリ^ステル主演による^人気官能ドラマの^第2弾。香港を舞^台にさまざまな性^体験を重ねる若妻^を描く。 [R－1^5]
26:50~ザ・ローリン^グ・ストーン^ズ：ハイド・パ^ーク・ライヴ 〜^SWEET S…~ザ・ローリング・^ストーンズが2013^年7月6日・13日の^2日間に渡り英国^ハイド・パークで^行ったコンサート^を放送。`],
  ['11 BS11イ..', `5:00~ショッピング情^報~テレビショッピン^グ
5:30~ショッピング情^報~テレビショッピン^グ
6:00~ショッピング情^報~テレビショッピン^グ
6:30~ショッピング情^報~テレビショッピン
7:00~🈢ショップチャ^ンネル クリーム^でシャンプーか^ら白髪染めまで^一気にケア！ M^ee~手袋不要で洗いな^がら染めるオール
8:00~🈢ショップチャ^ンネル 篠田セレ^クト アイブレラ^クリアソフィー^春の新色登場！~瞳と目元を守る多^機能サングラスに^さくらピンク色が
9:00~🈢ショップチャ^ンネル ギフトフ^ロムニューヨー^ク ニューヨーク^デザインの麗し^ジュエ~ジュエリー／上質
10:00~華の嵐 第10話^（全70話）~嵐シリーズ第2
10:30~ショッピング情^報~テレビショッピン
11:00~必殺仕事人Ⅴ 第^6話「りつ、減量^する」（全26^話）~藤田まこと主演の^中村主水シリーズ
12:00~🈢ショップチャ^ンネル GO！G^O！バリュー 薬^酵泉 薬用全身オ^イル美容液~昼12時は午後のお^すすめ商品「GO
13:00+~中国時代劇 鳳凰^の飛翔 第13話^（全70話）~宮廷は華やかな地
14:00~ショッピング情^報~テレビショッピン
14:29+~福寿草 第71話^「残酷な事実」~同時間帯視聴率1^位を23週連続獲^得！ドロドロ復讐^劇には欠かせない^イ・ユリ主演！何^年経っても色褪せ
15:30~ショッピング情^報~テレビショッピン
15:59+~大宋宮詞 〜愛と^策謀の宮廷絵^巻〜 第38話~本格歴史ドラマ！^耐えて、考えて、^生き残る…平民か^ら国を支える皇太^后へ上り詰めた実^在の女性・劉娥の
17:00~お買い物チャン^ネル QVC TOU^CH Premiere キ^ッチンウェア~毎日使うものだか
17:59~おさんぽアワ^ー・ぐしけんさ
18:27*~＃居酒屋新幹線^第6話「仙台・デ
18:54~🈢速報ニュース^インサイドOUT
19:00~中国時代劇 灼灼^風流〜宮中に咲^く愛の華〜 第10^話「母が暮らし^た屋敷」（全38^話）~『明蘭』のウィリ^アム・フォンが百
20:00*~テレサ・テン 歌^姫を愛した人々^第41話「交際の^発表」
20:58~🈑宝くじドリー
21:00~🈢インサイドOU^T 疑惑隠し!?イ^ラン攻撃 トラン^プ氏「3つの窮
21:53*~桜前線2026 全国^キャスターリレ
22:00~🈢ショップチャ^ンネル クリーム^でシャンプーか^ら白髪染めまで^一気にケア！ M^ee
23:00*~WEEKLYワール^ドサッカー「プ^レミア30節／ラ
23:30~We are STARD^OM!!〜世界が注^目！女子プロレ^ス〜 ＃220~プロレス・総合格
24:00~勇者パーティー^にかわいい子が^いたので、告白^してみた。 第11^話
24:30*~異世界の沙汰は^社畜次第 ＃11^「入院しまし
25:00*~異世界でチート^能力を手にした
25:30~ごりやくさん 第^27回「金神社」
26:00~ごりやくさん 第^28回「住吉大^社」（大阪）~全国各地の「御利^益（ごりやく）が^得られる」として^有名な神社を訪^問。その御利益の
26:30~ごりやくさん 第^29回「熊野三^山」（和歌山）
27:00~ごりやくさん 第^30回「総集編」
27:30~ごりやくさん 第^31回「秩父神^社」（埼玉）~全国各地の「御利
28:00+~中国時代劇 蘭陵^王 第22話「すれ^違う心」（全46^話）~「明蘭」のウィリ^アム・フォンが、^あまりの美貌のた`],
  ['12 BS12ト..', `5:00~清水節子と蒔田^由美子の歌日記^＃503~清水節子と蒔田由^美子がその時々の
5:30+~中国ドラマ 浮図^縁〜乱世に咲く^真実の愛〜第14^話「おかしな^家」（字幕）~中国で人気急上昇
6:25~${SHOP}
6:54~BS12ガイド
7:00+~中国ドラマ 七夜^雪【リー・チン^×ツォン・シュ^ンシー豪華共^演！】第14話^（字幕）
7:57~新鮮！にっぽん
8:00~QVC TOUCH Pr^emiere キッチン^ウェア~毎日使うものだか^らこそ、手に触れ^てうれしい感触^を！今のスタイル^にマッチした、こ
9:00~QVC ModdedAn^ce（モーデッド^アンス）~一着で強い存在感^を持つデザインが^特徴。洗練されて^いながら、伸縮性^のある生地と適度
10:00~QVC メディカセ^ル 幹細胞研究ス^キンケア~ヒト羊膜由来幹細^胞順化培養液を配^合した美容液など^が登場
11:00~QVC TOUCH Pr^emiere キッチン^ウェア~毎日使うものだか^らこそ、手に触れ^てうれしい感触
12:00~QVC アミュレッ^トジュエリー エ^クラドゥテール~ファッション性あ^ふれるスタイリッ^シュなデザイン。^とよた真帆さんの
13:00~QVC 春のマスト^バイ！ Denim&^Co~カラフルでカジュ^アルなスタイル、^デニムファッショ
14:00~QVC お昼はチェ^ッQ！ワクワク1^4~ちょっとひと息、^リラックスタイム^のお楽しみ。毎日^お昼14時は「ワク^ワク14」で決ま
15:00~中国ドラマ 墨雨^雲間〜美しき復^讐〜【ウー・ジ^ンイエン主演】^第39話、第40話^字幕~ウー・ジンイエン^＆ワン・シンユ^エ、豪華スターが^共演！名プロデュ^ーサーが贈るエン^ターテイメント時^代劇！死と絶望の^淵に立つヒロイン^が選んだのは…。^（全43話）
17:00~${SHOP}~厳選した商品をご
17:30~中国ドラマ 転生^才女は恋ざか^り！【日本初放^送！ラブコメ時^代劇】第11話
18:30~スイーツの女王^様 ＃12「クレー^プ」~ダレノガレ明美と
19:00~映画「刺青 4Kデ^ジタル修復版」^【大映映画特^集！増村保造監^督作品】~しびれるような恍^惚とつきさすよう^な痛みのうちに、^魔性の肌を持つ女^が生れた！
20:40~久住昌之のニッ^ポン箸休めさん
21:00+~白い巨塔【唐沢^寿明主演ドラ^マ】第18話「師^動く」
21:55~ふるさと グルメ
22:00~QVC TOUCH Pr^emiere キッチン^ウェア~毎日使うものだか^らこそ、手に触れ^てうれしい感触^を！今のスタイル
23:00~QVC 体の内から^美しく TO-II~QVCで何度もベ^ストセラーに輝く^サプリメント」。^卵殻膜を配合して^います。
24:00~QVC メイクの多^様性と楽しさを^VDIVOV byPIK^ACO~メイクアップアー^ティスト ピカ子^さんの経験やノウ^ハウを活かしたメ
25:00~QVC 澤崎 隆人^のドラマティッ^クファッション~澤崎隆人さんが女^性をより美しく魅
26:00~BOOKSTAND.T^V ＃437【ツギ^クルやM-1で注^目の若手芸人・^豆鉄砲登場！】~火曜深夜のカルチ^ャートーク！MC^の原カントくん・
26:30~スイーツの女王^様 ＃5「バスク^チーズケーキ」
27:00~BS12 MUSIC TR^IP 〜ハワイ編〜
27:30+~中国ドラマ 華麗^なる転身〜妻た^ちの逆襲〜 第8^話（字幕）~クズ男に正義の鉄^槌を！キャリアウ^ーマンとシングル^マザーが繰り広げ
28:30~歌風 〜歌謡曲の^息吹き〜 ＃103~タイトル「歌風」`],
  ['放送大学テレビ', `6:00~🈑住まいの環境^論 第7回~「住まいの空気環^境」
6:45~🈑住まいの環境^論 第8回~「住まいの光環^境・視環境」
7:30~🈑住まいの環境^論 第9回~「住まいの音環^境」
8:15~🈑より良い思考^の技法 第7回~「認知心理学か^ら、人の推論プロ^セスを知る」
9:00~🈑より良い思考^の技法 第8回~「認知バイアスを^克服する1」
9:45~🈑より良い思考^の技法 第9回~「認知バイアスを^克服する2」
10:30~🈑食と健康 第7^回~「脂質（2）生体^内の代謝・その調^節・機能」
11:15~🈑食と健康 第8^回~「ビタミン」
12:00~🈑食と健康 第9^回~「ミネラル」
12:45~🈑放送大学 教養^学部案内2026
13:00~授業科目案内
13:15~筋トレ アカデミ
13:30~🈑障害者の自立^と制度 第4回~「みんなが手話で^話した島」
14:15~🈑障害者の自立^と制度 第5回~「感染症は作られ^る〜ハンセン病対^策の日米比較〜」
15:00~🈑障害者の自立^と制度 第6回~「難病は作られ^る〜帝国陸海軍の^脚気対策〜」
15:45~🈑心理カウンセ^リング序説 第4^回~「理解と見立て：^インテーク面接」
16:30~🈑心理カウンセ^リング序説 第5^回~「カウンセリング^における相互作^用」
17:15~🈑心理カウンセ^リング序説 第6^回~「カウンセリング
18:00~データサイエン^ス革命「1 デー^タサイエンスこ^とはじめ」
18:45~放送大学附属図^書館利用ガイド
19:15~授業科目案内
19:30~🈑色を探究する^第4回~「見える〜見えな^い〜見せる〜見せ^ない」
20:15~🈑色を探究する^第5回~「見える色・見え^ない色1―光と色^―」
21:00~🈑色を探究する^第6回~「見える色・見え^ない色2―石と色
21:45~🈑初歩からの数^学 第4回~「実数」
22:30~🈑初歩からの数^学 第5回~「方程式と不等^式」
23:15~🈑初歩からの数^学 第6回~「図形の性質」
24:00-~`],
  ['放送大学テレビ', `6:00~🈑生物の進化と^多様化の科学 第^7回~「顕生代の絶滅事^件と生物多様性」
6:45~🈑生物の進化と^多様化の科学 第^8回~「植物の陸上進出^と多様化」
7:30~🈑生物の進化と^多様化の科学 第^9回~「花の進化〜陸上^植物の生殖器官の^進化〜」
8:15~🈑肢体不自由児^の教育 第7回~「肢体不自由教育^の教育課程」
9:00~🈑肢体不自由児^の教育 第8回~「自立活動の指^導」
9:45~🈑肢体不自由児^の教育 第9回~「身体の動きの指^導」
10:30~🈑市民生活と裁^判 第7回~「家族間の紛争と^その解決（3）高^齢者をめぐる紛^争」
11:15~🈑市民生活と裁^判 第8回~「障害のある人の
12:00~🈑市民生活と裁^判 第9回~「住まいに関する^紛争とその解決」
12:45-~
13:30~🈑舞台芸術の魅^力 第4回~「バレエの古典」
14:15~🈑舞台芸術の魅^力 第5回~「バレエの現在」
15:00~🈑舞台芸術の魅^力 第6回~「ダンスの現在^−モダンダンスか^らコンテンポラリ
15:45~🈑データの分析^と知識発見 第4^回~「データの視覚^化」
16:30~🈑データの分析^と知識発見 第5^回~「確率分布」
17:15~🈑データの分析^と知識発見 第6^回~「アソシエーショ
18:00-~`],
  ['グリーンチャンネル', `6:30~カラーバー・GC^ロゴ
7:00~🈚がんばる！畜^産！9 #6🈑~「なるほど！畜産^現場 北海道の酪
7:30~🈚がんばる！畜^産！7 #12🈑~「なるほど！畜産^現場 東北一の酪
8:00~🈚がんばる！畜^産！6 #12🈑~「畜産トレンド発^見！循環型酪農で
8:30~🈚がんばる！畜^産！5 #12🈑~「なるほど！畜産
9:00~🈚グリーンチャ^ンネル傑作選^（しょこたんの^馬図鑑 グラスワ^ンダー編） #134^🈑~「中川翔子がグラ
10:00~🈚新・馬学講座^ホースアカデミ^ー #112🈑
10:30~🈚Green Healing~大自然の中でのび^のびと過ごす馬の
11:00~🈚新・競馬ワン^ダラー5 #3🈑~惜別の荒尾競馬場
11:30~🈚草野仁のGate^J.プラス（河村
12:00~ダート競馬JAP^AN※60分拡大版^#143~「日本全国のダー^ト競馬展望番組」
13:00~競馬年鑑（平成1^6年Part5） #115^🈑~「平成16年Part5^（セントウルS〜^アルゼンチン共和
14:00~栄光の名馬たち^セレクション^（サクラユタカ^オー）🈑~#26「サクラユタ^カオー」
15:00~あつまれ！ダビ^スタもりあがり^隊 #45🈑~ダビスタの完全新
15:30~Green Healing~大自然の中でのび^のびと過ごす馬の^姿をお届けしま
16:00~馬産地通信 #339^🈑~「種牡馬展示会第
16:30~ザ・馬券DUEL^WWW R #7🈑~コージ×TIM・ゴ^ルゴ松本(1)
17:00~栄光の名馬たち^（ジャックドー^ル） #432🈑~「ジャックドー^ル」
18:00~重賞メモリアル^#1003🈑~当該週に行われる^重賞競走の過去の^レース映像をお届^けします。
19:00~ザ・パトロール^ビデオ（場別）^#895~「第2回中山競馬^第5・6日、第1回^阪神競馬第7・8^日、第1回中京競^馬第1・2日」
22:00~競馬プロス #149~馬好きブラザーズ^と藤懸貴志騎手の^夜な夜な競馬談義
23:00~先週の結果分析3^#11~「先週行われたレ^ースをタイム面や^レース内容等から^鋭く分析！」
24:00~炎の十番勝負202^6春〜予想編〜~「春の訪れととも^に十番勝負の季節^が到来！G1戦線^を大予想！」
25:00~競馬プロス #149~馬好きブラザーズ^と藤懸貴志騎手の^夜な夜な競馬談義
26:00~GC番宣・ロゴ・^カラーバー
26:30-~`],
  ['BSアニマックス', `4:30~TVアニメ キン^肉マン 完璧超人^始祖編Season2^#18,19~#18「超人創世^記!!」 #19「鋼鉄^の不沈艦!!」 長年^争いを続けてきた^正義・悪魔・完璧
5:30~情報~この時間は情報番^組をお送りしてお^ります。
6:00~🈑薬屋のひとり^ごと #31~#31「選択の廟」^帝の寵妃・玉葉妃
6:30*~🈑怪獣8号 番外^編「保科の休^日」
7:00~🈑Dr.STONE第3^期 #9,10~#9「美しい科学」^#10「SCIENCE^WARS」 全人類^が、謎の現象によ^り一瞬で石化して^数千年…。超人的^な頭脳を持つ、根
8:00~🈑『ワンパンマ^ン』第2期 #23,2^4 END~#23「それぞれの^矜持」 #24「弟子^の尻拭い」END^趣味でヒーローを^始めた男、サイタ
9:00~🈑こちら葛飾区^亀有公園前派出^所 #111,112~#111「兄とし^て…!」 #112「身^内として…!」 葛^飾区の亀有公園前^派出所に勤務する
10:00~🈑僕のヒーロー^アカデミア #11,^12~#11「ゲームオー^バー」 #12「オー^ルマイト」 人口^の8割が何らかの
11:00~🈑キングダム 第^2シリーズ #8,9~#8「政と紫夏」 #^9「つなぐ願い」^紀元前、中国。春^秋・戦国時代。先
12:00~🈑夏目友人帳 参^#9,10~#9「秋風切って」^#10「割れた鏡」^妖怪が見える少^年・夏目貴志は、^祖母・レイコの遺
13:00~村井の恋 #11,12^END~第11話〜第12話 E^ND 様子のおかし^い男子高校生・村^井は担任の田中先
14:00~🈑薬屋のひとり^ごと #31~#31「選択の廟」^帝の寵妃・玉葉妃
14:30~情報~この時間は情報番^組をお送りしてお^ります。
15:00~🈑SPY×FAMIL^Y（スパイファ^ミリー） #17,18~MISSION:17,18^「ぐりほんさくせ^んを決行せよ／＜^鋼鉄の淑女(フル^メタルレディ)＞^／オムライスレ
16:00~🈑僕のヒーロー^アカデミア #11,^12~#11「ゲームオー^バー」 #12「オー^ルマイト」 人口^の8割が何らかの^特異体質である超^人社会となった現^在。少年・緑谷
17:00~🈑夏目友人帳 参^#9,10~#9「秋風切って」^#10「割れた鏡」^妖怪が見える少^年・夏目貴志は、
18:00~🈑Dr.STONE第3^期 #9,10~#9「美しい科学」^#10「SCIENCE^WARS」 全人類^が、謎の現象によ^り一瞬で石化して^数千年…。超人的
19:00~出禁のモグラ #1^0~#10「真価」 あの^世から出禁をくら
19:30~🈑薬屋のひとり^ごと #31~#31「選択の廟」^帝の寵妃・玉葉妃
20:00~🈑SPY×FAMIL^Y（スパイファ^ミリー） #17,18~MISSION:17,18^「ぐりほんさくせ
21:00~🈑キングダム 第^2シリーズ #8,9~#8「政と紫夏」 #^9「つなぐ願い」^紀元前、中国。春^秋・戦国時代。先^の戦の功績により
22:00~🈑夏目友人帳 参^#9,10~#9「秋風切って」^#10「割れた鏡」^妖怪が見える少^年・夏目貴志は、^祖母・レイコの遺
23:00~🈑『ワンパンマ^ン』第2期 #23,2^4 END~#23「それぞれの^矜持」 #24「弟子^の尻拭い」END^趣味でヒーローを^始めた男、サイタ^マ。特訓により無
24:00~TVアニメ キン^肉マン 完璧超人^始祖編Season2^#20,21~#20「師の教えを^胸に!!」 #21「ウ^ォーズマン・リブ^ート!!」 長年争い
25:00~🈑SPY×FAMIL^Y（スパイファ^ミリー） #17,18~MISSION:17,18^「ぐりほんさくせ
26:00~🈑僕のヒーロー^アカデミア #11,^12~#11「ゲームオー^バー」 #12「オー^ルマイト」 人口^の8割が何らかの^特異体質である超^人社会となった現^在。少年・緑谷^出…
27:00~出禁のモグラ #1^0
27:30~🈑『ワンパンマ^ン』第2期 #23,2^4 END~#23「それぞれの^矜持」 #24「弟子^の尻拭い」END^趣味でヒーローを^始めた男、サイタ^マ。特訓により無^敵のパワーを手に
28:30~TVアニメ キン^肉マン 完璧超人^始祖編Season2`],
  ['J SPORTS 1', `4:00~休止~この時間は放送を^休止しています。^番組に関する詳細^は下記ホームペー^ジまで www.jspor^ts.co.jp
6:00~ドキュメンタリ^ーThe REAL 東^京グレートベア^ーズ 柳田将洋／^後藤陸翔~東京GBの快進撃^を支える柳田将洋
7:00~ワールド・オ^ブ・フリースポ^ーツ #8【カヤッ^ク】
7:30~【45分】ラグビ^ーリーグワン202^5-26 D1 第11節^トヨタ×浦安~＜Ball in play ハ^イライト＞ 〜D1^第11節〜 “ほ
8:15~【45分】ラグビ^ーリーグワン202^5-26 D1 第11節^東京SG×BL東^京
9:00~インフォメーシ^ョン~暮らしに役立つ情^報番組。
9:30~ジャパンラグビ^ー リーグワン20^25-26 D1 第11節^神戸S×相模原D^B~国内最高峰のラグ^ビーリーグ！世界^トップクラスのプ^レーに注目！ コ^ベルコ神戸スティ^ーラーズ×三菱重^工相模原ダイナボ^アーズ
12:00~[無料]ラグビー^わんだほー！〜^ラグビー情報番^組〜 #123~最新情報の「ニュ^ースジャッカル」^や、好プレー珍プ
13:00~原田伸郎のめざ^せパーゴルフ3 #^1387【ハッピー
13:30~[無料]インフォ^メーション
14:00~桑田泉のゴルフ^アカデミー シー^ズン1 #10【ハッ^ピーゴルフアワ
14:30~【内藤智文、W^杯初優勝！】ス^キージャンプ FI^S W杯25/26 オ^スロ(3/15)~【男子LH】 世界^各地を転戦するFI^S ワールドカップ^は五輪、世界選手^権と並び重要な大^会に位置付けられ^る。
16:30~ジャパンラグビ^ー リーグワン20^25-26 D2 第8節^九州KV×花園L~国内最高峰のラグ^ビーリーグ！世界^トップクラスのプ^レーに注目！ 九^州電力キューデン^ヴォルテクス×花^園近鉄ライナーズ
19:00~ジャパンラグビ^ー リーグワン20^25-26 D1 第11節^S東京ベイ×埼^玉WK~国内最高峰のラグ^ビーリーグ！世界^トップクラスのプ^レーに注目！ ク^ボタスピアーズ船^橋・東京ベイ×埼^玉ワイルドナイツ
21:30~ジャパンラグビ^ー リーグワン20^25-26 D1 第11節^三重H×横浜E~国内最高峰のラグ^ビーリーグ！世界^トップクラスのプ^レーに注目！ 三^重ホンダヒート×^横浜キヤノンイー^グルス
24:00~[無料]ラグビー^わんだほー！〜^ラグビー情報番^組〜 #123~最新情報の「ニュ^ースジャッカル」^や、好プレー珍プ^レーなどラグビー
25:00~杏ちゃん＆しん^やのラグビーは
25:30~[無料]SUPER G
25:45~[無料]まるっと^バレーボール 〜^大同生命SVリー^グ情報番組〜#1^9~▼特集：SAGA久^光スプリングス^平山詩嫣×荒木彩^花の仲良しコンビ
26:30~[解]J SPORTS^HOOP!2026 学生^バスケ情報番組
27:00~機器メンテナン^ス~機器メンテナンス^のため、この時間^は放送を休止して^います。 番組に^関する詳細は下記^ホームページまで^www.jsports.co.jp`],
  ['J SPORTS 2', `4:00~休止~この時間は放送を^休止しています。^番組に関する詳細^は下記ホームペー^ジまで www.jspor^ts.co.jp
6:00~【45分】ラグビ^ーリーグワン202^5-26 D1 第11節^東京ベイ×埼玉
6:45~【45分】ラグビ^ーリーグワン202^5-26 D1 第11節^神戸×相模原~＜Ball in play ハ^イライト＞ 〜D1
7:30~プロバスケ Bリ^ーグ 2025-26 第2^6節-1 琉球×長^崎(3/14)~10年目の節目を迎^える2025-26のBリ^ーグ。 チーム、^観客が一体となっ^て生み出される^「ココロ、たぎ^る。」瞬間に注^目！ 琉球ゴール^デンキングス×長^崎ヴェルカ
10:00~[解]J SPORTS^HOOP!2026 学生^バスケ情報番組
10:30~インフォメーシ^ョン~暮らしに役立つ情
11:00~第46回全国中学^校スケート大会^フィギュアスケ^ート 女子SP-1^【ハイライト】~数々のスター選手
12:00~第46回全国中学^校スケート大会^フィギュアスケ^ート 女子SP-2^【ハイライト】~数々のスター選手^たちを輩出してき
13:00~[初]ツール・^ド・フランス202^5 第17ステージ^Cycle*【2時間で^おさらい！】~【ボレーヌ〜ヴァ^ランス】 ゲス^ト：元嶋佑弥 解^説：栗村修 実^況：サッシャ 開^催日：2025年7月2^3日(現地)
15:00~[初]ツール・^ド・フランス202^5 第18ステージ^Cycle*【2時間で^おさらい！】~【ヴィフ〜ラ・ロ^ズ峠】 リモート^解説：西谷泰治^解説：飯島誠 実^況：足立清紀、永^田実 開催日：202^5年7月24日(現地)
17:00~ドキュメンタリ^ーThe REAL ア^ルバルク東京 〜^キャプテン・ザ^ック選手の秘^密
18:00~ドキュメンタリ^ーThe REAL 東^京グレートベア^ーズ 柳田将洋／^後藤陸翔~東京GBの快進撃^を支える柳田将洋
19:00~杏ちゃん＆しん^やのラグビーは^じまるよ！2026^#1
19:30~[無料]ラグビー^わんだほー！〜^ラグビー情報番^組〜 #123~最新情報の「ニュ^ースジャッカル」^や、好プレー珍プ
20:30~[初]バスケ スプ^リングマッチ202^6 #3 東山×早稲^田大学~【高校バスケ強豪^校が大学生に挑^む！】 高校生と^大学生のプライド^がぶつかり合うス^ペシャルマッチが
22:00~[無料][初]まる^っとバレーボー^ル 〜大同生命S^Vリーグ情報番
22:45~バレー大同生命^SVリーグ25-26^男子第17節 WD^名古屋×東京GB^(3/14)~年明けからさらに^快進撃を続けるW^D名古屋と、CS進^出へ向けて一戦必^勝で挑む東京GB^が激突！どちらが^勝利を掴むのか注^目の一戦！
25:45~【45分】ラグビ^ーリーグワン202^5-26 D1 第11節^東京SG×BL東^京~＜Ball in play ハ^イライト＞ 〜D1^第11節〜 “ほ^ぼ”すべてのプレ
26:30~結束！侍ジャパ^ン #130~トップチームはも
27:00~機器メンテナン^ス~機器メンテナンス^のため、この時間^は放送を休止して^います。 番組に^関する詳細は下記^ホームページまで^www.jsports.co.jp`],
  ['J SPORTS 3', `4:00~休止~この時間は放送を^休止しています。^番組に関する詳細^は下記ホームペー^ジまで www.jspor^ts.co.jp
6:00~ワールド・オ^ブ・フリースポ^ーツ #10【キャ^ニオニング】
6:30~インフォメーシ^ョン~暮らしに役立つ情
7:00~ツール・ド・フ^ランス2025 第2^ステージ Cycle*^【2時間でおさら^い！】~【ロウィン・プラ^ンク〜ブローニ^ュ・シュル・メー^ル】 リモート解^説：別府史之 解^説：新城幸也 実^況：足立清紀 開^催日：2025年7月6^日(現地)
9:00~バレー大同生命^SVリーグ25-26^男子第17節 WD^名古屋×東京GB^(3/14)~年明けからさらに^快進撃を続けるW^D名古屋と、CS進^出へ向けて一戦必^勝で挑む東京GB^が激突！どちらが^勝利を掴むのか注^目の一戦！
12:00~ジャパンラグビ^ー リーグワン20^25-26 D2 第8節^九州KV×花園L~国内最高峰のラグ^ビーリーグ！世界^トップクラスのプ^レーに注目！ 九^州電力キューデン^ヴォルテクス×花^園近鉄ライナーズ
14:30~MOTOR GAME^S #624~車＆バイクによる
15:00~[無料]SUPER G
15:10~インフォメーシ^ョン~暮らしに役立つ情
15:40~【45分】ラグビ^ーリーグワン202^5-26D1第11節東^京ベイ×埼玉~＜Ball in play ハ^イライト＞ 〜D1^第11節〜
16:25~【45分】ラグビ^ーリーグワン202^5-26D1第11節三^重×横浜~＜Ball in play ハ^イライト＞ 〜D1^第11節〜
17:10~【45分】ラグビ^ーリーグワン202^5-26D1第11節BR^東京×静岡
17:55~[生]プロ野球202^6オリックス×広^島(3/17)【オー^プン戦】~球春到来！公式戦^開幕前のチーム状^態をオープン戦で^要チェック！
22:00~プロ野球2026 オ^リックス×広島^(3/17)【オープ^ン戦】~球春到来！公式戦^開幕前のチーム状^態をオープン戦で^要チェック！ オ^リックス・バファ^ローズ×広島東洋^カープ
25:00~ガンバレ日本プ^ロ野球!?リター
25:30~【勝田悲願の初^優勝】WRC世界^ラリー選手権202^6第3戦ケニアパ^ワーステージ^【SS20】~WRCはFIAが主催^するラリーの世界^選手権。舞台は舗^装路(ターマッ^ク)、未舗装路(グ^ラベル)、スノー^など様々な条件で^行われる。
27:00~機器メンテナン^ス~機器メンテナンス^のため、この時間^は放送を休止して^います。 番組に^関する詳細は下記^ホームページまで^www.jsports.co.jp`],
  ['J SPORTS 4', `4:00~休止~この時間は放送を^休止しています。^番組に関する詳細^は下記ホームペー^ジまで www.jspor^ts.co.jp
6:00~ジャパンラグビ^ー リーグワン20^25-26 D1 第11節^三重H×横浜E~国内最高峰のラグ^ビーリーグ！世界^トップクラスのプ^レーに注目！ 三^重ホンダヒート×^横浜キヤノンイー^グルス
8:30~ジャパンラグビ^ー リーグワン20^25-26 D1 第11節^BR東京×静岡B^R~国内最高峰のラグ^ビーリーグ！世界^トップクラスのプ^レーに注目！ ブ^ラックラムズ東京^×静岡ブルーレヴ^ズ
11:00~プロバスケ Bリ^ーグ 2025-26 第2^6節-1 琉球×長^崎(3/14)~10年目の節目を迎^える2025-26のBリ^ーグ。 チーム、^観客が一体となっ^て生み出される^「ココロ、たぎ^る。」瞬間に注^目！ 琉球ゴール^デンキングス×長^崎ヴェルカ
13:30~プロバスケ Bリ^ーグ 2025-26 第2^6節-2 三遠×北^海道(3/15)~10年目の節目を迎^える2025-26のBリ^ーグ。 チーム、^観客が一体となっ^て生み出される^「ココロ、たぎ^る。」瞬間に注^目！ 三遠ネオフ^ェニックス×レバ^ンガ北海道
16:00~[解]J SPORTS^HOOP!2026 学生^バスケ情報番組
16:30~SUPER GT 2026^公式テスト【セ^ッション1】岡山^国際サーキット^(3/6)~開幕を前に行われ^る公式テスト。新^体制を迎える各チ^ームの仕上がり具^合など、インタビ^ューを交えながら^お届けする。
19:00~SUPER GT 2026^公式テスト【セ^ッション2】岡山^国際サーキット^(3/6)~開幕を前に行われ^る公式テスト。新^体制を迎える各チ^ームの仕上がり具^合など、インタビ^ューを交えながら^お届けする。
21:30~UCI世界選手権^大会2026 男女エ^リート シクロク^ロス Cycle*~世界一の選手であ^る証明「マイヨ・^アルカンシェル」^を巡る世界王者決^定戦！ 解説：池^本真也 実況：小^俣雄風太 開催^日：2026年1月31^日-2月1日(現地)
25:00~高校バスケ ウイ^ンターカップ202^5 #57 男子準決^勝 鳥取城北×福^大大濠~高校No.1を決定す^るバスケの冬の祭^典ウインターカッ^プ。 J SPORTSで^は、熱き高校生達^の戦いの軌跡を徹^底放送！
26:45~[無料]SUPER G^T 2026 公式ガイ
27:00~機器メンテナン^ス~機器メンテナンス^のため、この時間^は放送を休止して^います。 番組に^関する詳細は下記^ホームページまで^www.jsports.co.jp`],
  ['BS釣りビジョン', `5:00~AREA WARS 16^レジェンド河辺^と説く！~エリアトラウト界^の革命児・菊地栄^一が他ジャンルの^著名アングラーと^コラボ。今回は東^山湖フィッシング^エリアを舞台に
6:00~きょうも大漁！^関東沖釣り爆釣^会 29~関東の沖釣りの魅
6:30~J LAND 25 メバ^リング＆ワカサ^ギ
7:00~Dz SALT 2ND 4^8 宮城ロックフ^ィッシュ~旬の海のルアーゲ^ームをお送りする^『Dz SALT 2N^D』。今回の舞台^は宮城県牡鹿半^島。アングラー
8:00~IGNITION 8 宮崎^島野浦の寒グレ2^026~磯釣りファンから^絶大な支持を得る^猪熊博之。そんな^彼が魅了されるフ^カセ釣りの楽しさ
9:00~休日は釣りに夢^中！ 26 カット^ウフグ後編
9:30~ブレイクタイム~季節に合わせた^様々な内容をお届^けします。
10:00~アナタに釣って^いただきます！^35 長谷文彦~お馴染みの釣り名^人が、ジャンルや^釣り方に捉われ^ず、様々な釣りに
11:00~釣り満喫！グル^メ旅 4 冬の旅~旅もしたいがグル^メも楽しみたい。^更に釣りも出来た^ら最高！そんな方
12:00~マイスターズ 三^つ星フィッシン^グ 1 杉田千紘~様々なジャンルの^釣りのインフルエ^ンサー・アングラ^ーズマイスターが
13:00~ブレイクタイム~季節に合わせた^様々な内容をお届
13:30~関西発めちゃめ^ちゃ釣りたい！
14:00~Let's try ソルト^ゲーム 17 スル^メイカ~ソルトルアーの入^門番組『Let’s tr^y ソルトゲー^ム』。太田くんと^吉村唯ちゃんが
15:00~【リクエスト】^Seabass Journe^y 4 静岡県 浜名^湖・天竜川~スペシャリスト・^村岡昌憲が大型の^シーバスを求めて^全国を旅する。今^回は、静岡県・浜
16:00~ブレイクタイム~季節に合わせた^様々な内容をお届
16:30~発見！すごかby^九州 20 熊本コ^ウイカ~九州の身近な釣り^を紹介する番組^『発見！すごかb
17:00~SALT X 8 長崎^県五島福江島ビ^ッグゲーム~旬の海のルアーゲ^ームをお届けする^『SALT X』。今
18:00~海と青の物語 26^冬の淡路島ライ^トゲーム攻略~誰もが楽しめるシ^ョアソルトゲーム^をテーマとした^『海と青の物^語』。今回は海害
19:00~🈖なるほど！沖^釣りマスター 42~「沖釣りマスタ^ー」と呼ばれる名^人達が、「なるほ^ど」をキーワード^に裏技から小ネタ^まで隠す事なく披^露する沖釣り専門
20:00~🈖上々SALT 1^早春のティップ^ランエギング~ソルトルアーゲー^ムのあらゆるスキ
21:00~GAN's GANGS^85 春の七色ダム~S字系ビッグベイ^トの創始者である^紀州の凄腕・平岩^孝典が、独自の理^論とスタイルでビ
22:00~🈖テッペンDAS^H！ 33 春の愛媛^県新宮ダム~釣果はもちろん、^数あるバス釣り番^組の中で人気でも^ナンバーワンを誇
23:00~【春めく季節の^オカッパリ攻略^特集】SOUL JE^RKER 9 鹿児島^県南薩エリア~テーマはプラスワ^ンエギング。これ^まで釣れなかった^アオリイカを釣る
24:00~G WORLD 29 宮^崎県延岡でモン^スターアオリ攻^略~数多ある釣りの価^値観の中で、記録^魚を釣り上げるこ^とにこだわり、最
25:00~オフショアレボ^リューションNE^XT 168 鹿児島~沖釣り界の新たな^発見、そして革命
26:00~ソルトギャラリ^ー 61 三重県の^トンジギ~旬のソルトルアー^ゲームをお送りす^る『ソルトギャラ^リー』。今回は本^格派女性アングラ^ーの神野梓さん^が、通称「トン^ボ」と呼ばれるビ^ンナガを狙ったト
27:00~ハイパーエキス^パート 渓流解禁^2024 寒狭川~海・川・湖とあら^ゆるフィールドの^フライフィッシン^グを紹介していく
28:00~ZENSOH流儀 7^三重県尾鷲~ウキフカセ釣りを^もっと身近に！元^プロスケートボー^ダーの経歴を持つ^吉田尚玄が、溢れ^る才能を武器に全^国の磯や堤防を巡`],
  ['WOWOWプラス', `4:00~🈙ワールドエン^ド~巨大な停電で世界^の大半が壊滅。そ^れは謎の異星人に^よる地球侵略の序^章だった……。異^星人に立ち向かう^特殊部隊の死闘^を、壮大なスケー^ルで描いたロシア^産SFアクショ^ン。
6:45~宮廷女官 若曦^（ジャクギ） #2^1（全35話）~現代の女性が突然^タイムスリップし^た先は18世紀初^頭・清の時代、出^会ったのは美しき
7:45+~🈙女殺油地獄（1^992） ◆五社英^雄監督×樋口可^南子主演~近松門左衛門の同^名人形浄瑠璃を、^五社英雄監督が樋^口可南子の主演で^映画化。『鬼龍院^花子の生涯』以^降、さまざまな女^性の情念を描き続^けた五社監督の遺^作となった愛憎^劇。
9:50+~🈙肉体の門（198^8） ◆五社英雄^監督×かたせ梨^乃主演~焼け野原となった^街に、原色の欲望^が渦巻く。失うも^のは何もない時代^に、自らの肉体だ^けを武器に懸命に^生きる男と女。性^を売り、生を得る^女たちの圧倒的な^肉体が炸裂する。
12:00~永遠の桃花〜三^生三世〜 #29^（全58話）~何度生まれ変わっ^ても、私は貴方と^めぐり会う―三^世に渡る一途な純
13:00~みみより生活情^報
13:30~ソールズベリ 毒^殺未遂事件 #2^（全4話）~2018年3月、英国^ソールズベリで猛^毒の神経剤による
14:25~🈙駆込み女と駆^出し男 ◆大泉^洋、戸田恵梨香~大泉洋ら人気俳優^陣が豪華に共演し^た人情時代劇。江^戸時代の後期、離^婚を望む女性たち^が駆け込む縁切り^寺・東慶寺には、^彼女たちをめぐる^悲喜こもごもの物^語があった……。
17:00~🈙荒野の七人~黒澤明の『七人の^侍』をユル・ブリ^ンナー、スティー^ヴ・マックィーン^ら豪華キャストで^西部劇化。メキシ^コ寒村で野盗に怯^える村人を救うべ^く七人の凄腕ガン^マンが結集する。
19:15~🈙続・荒野の七^人~ユル・ブリンナー^主演の西部劇の大^傑作『荒野の七^人』の続編。かつ^て仲間とともに村^を守るべく闘った^男たちが、新たな^仲間を集めて再び^村を救うべく闘い^に挑む姿を描く。
21:00~🈙沈黙の報復~スティーヴン・セ^ガールが、息子を^殺した犯人への復^讐に燃える父親役^を演じたハードア^クション。理想に^燃える警官だった^息子の無念を晴ら^すべく、父親はギ^ャングの巣窟へ！
22:45~🈙沈黙のアフガ^ン~スティーヴン・セ^ガールがベテラン^の敏腕狙撃兵役に^扮した、痛快ミリ^タリーアクショ^ン。アフガニスタ^ンの戦場を舞台^に、狙撃兵と彼が^所属する米軍部隊^は窮地に挑む^が……。
24:20~🈙解放区 嵌まる^女~殺した女性の裸体^をさらす凄惨な連^続殺人事件に女性^刑事キャサリンが^挑むエロティック^サスペンス。
26:25~🈙ラブ・クライ^ム／官能の罠~ショーン・ヤング^主演のエロティッ^ク・サスペンス。^おとり捜査をして^いるうちにレイプ^強盗犯に拉致さ^れ、誘惑されてい^く女性検事を官能^的に描く。監督は^リジー・ボーデ^ン。
28:05~快楽のダイアリ^ー 裸のバーテン^ダー
28:35*~🈙万能鑑定士Q^モナ・リザの瞳^◆綾瀬はるか、`],
  ['日本映画専門ch', `5:00~僕と彼女と彼女^の生きる道（全1^2話）#12🈡【あ^さ4時の名優劇^場】~出演：草なぎ剛／^小雪／りょう 突^然の娘との二人暮^らしに戸惑う仕事^人間が、父親の育
6:00~🈙難波金融伝 ミ^ナミの帝王 劇場^版2 銀次郎VS整^理屋~竹内力／大森嘉之^／竹井みどり シ^リーズの劇場版第^二弾。倒産寸前の^会社を食い物にし^て利益を得る“整^理屋”と、銀次郎^との頭脳戦が繰り^広げられる。（19
7:40~秘密〜THE TOP^SECRET〜（全1^1話）#11🈡~出演：板垣李光人^／中島裕翔／門脇^麦 死者の最期の^情景を基に難事件^に挑む捜査員の葛^藤を描く。（2025^年/ドラマ）
8:35~🈙HOME 愛しの^座敷わらし~出演：水谷豊／安^田成美／橋本愛^監督：和泉聖治^東京から岩手の田^舎にやって来たサ^ラリーマン一家。^築200年の家で不^思議な出来事^が…。（2012年 1^10分）
10:30~【無料】生活情^報の時間~この時間は、ショ
11:00~女王の教室（全1^1話）#3-4~出演：天海祐希／^羽田美智子／原沙^知絵／尾美としの^り／夏帆／半海一^晃 ※放送時間の^詳細は日本映画専^門チャンネルHP^へ 「日本映画」^で検索！
13:00~ミステリー作家^六波羅一輝の推^理2 京都陰陽師^の殺人（主演・^上川隆也）~出演：上川隆也／^横山めぐみ／夏八^木勲 スランプに^陥っているミステ^リー作家・六波羅^一輝と、彼の担当^編集者・北山みな^みのコンビが事件
14:55~【無料】時代劇
15:00~信濃のコロンボ^事件ファイル2^「北国街道殺人^事件」（主演・^中村梅雀）~出演：中村梅雀／^原日出子／里見浩^太朗 長野県警捜^査一課警部・竹村^岩男＝別名「信濃^のコロンボ」が難^事件を解決する。
17:10~犯罪科学分析室^電子の標的2（主^演・伊原剛志）^【おとなのサス^ペンス劇場】~出演：伊原剛志／^手塚とおる／西村^雅彦 犯罪科学分^析室長・藤江康央^が事件に挑むシリ^ーズ第2弾！
19:00~朗讀劇『極楽牢^屋敷』（木下半^太版四谷怪談）^8月20日「かりそ^め」~出演：小宮璃央／^水石亜飛夢／新條^由芽 監督／脚^本：木下半太^『四谷怪談』に想^を得た朗読劇。^※TV初（2023年^114分）
21:00~岩井俊二映画祭^presentsマイリ^トル映画祭「長^谷川和彦映画^祭！」（特別編^集版）
22:00+~🈙うさぎドロッ^プ~出演：松山ケンイ^チ／芦田愛菜／香^里奈 監督：SABU^独身サラリーマン^と6歳の少女の珍^妙な親子生活を描^いたハートウォー^ミングムービー。^（2011年 114分）
24:00~古畑任三郎（第3^シリーズ）＜デ^ジタルリマスタ^ー版＞ #7~＜第7話＞「哀し^き完全犯罪」ゲス^ト：田中美佐子^田村正和主演「古
25:00+~[2K]🈙MR.JIM^MY ミスター・^ジミー レッド・^ツェッペリンに^全てを捧げた男~出演：ジミー桜井^監督：ピーター・^マイケル・ダウド^英国のギタリスト^に魅せられた凝り^性の日本人の劇的^な半生を追うドキ^ュメンタリー。^（2025年 115分）
27:05~やれたかも委員^会（全8話） #1
27:40~ロケ地探訪 旅め^ぐり #2 京都・^嵯峨野編
28:00~僕の歩く道（全1^1話）#1 【あさ4^時の名優劇場】~出演：草なぎ剛／^香里奈／佐々木蔵^之介 先天性障害^で10歳児程度の知^能しかない31歳の^自閉症の青年が懸`],
  ['ディズニーch', `4:00~ヒカルの碁#25-2^8~#25「第二十五局^恐れとあせりと」^ほか。祖父の蔵で^古い碁盤を見つけ^たことで、平安時^代の美丈夫、藤原^佐為と出会った進^藤ヒカル。突如、^佐為の魂がヒカル^に宿り…。
6:00~ミッキーマウス^クラブハウス#1^8🈔~#18「ブルートの
6:30~ラプンツェル^ザ・シリーズ#1^5🈔
7:00~ブルーイ#52🈔~#52「カゴおばけ^/ おいかけっこ /^ういうち」
7:30~フィニアスとフ^ァーブ#73🈔~#73「3つの州の石^器時代／イザベラ
8:00~ドックはおもち^ゃドクター#81^🈔
8:25~ちいさなプリン^セス ソフィア#1^9🈔
8:55~ミッキーマウ^ス！
9:00~ライオン・ガー^ド#37🈔~#37「ウクンブシ^の木」
9:30~ハイ・ホー7D#3^7🈔~#37「がんばれお
10:00~ミッキーマウス^ファンハウス#2^6🈔
10:30~ブルーイ#6🈔~#6「おいしゃさん^ごっこ / クレーン
11:00~ベイマックス^ザ・シリーズ#2^3🈔
11:30~ふしぎの国 アン^フィビア#54🈔
12:00~ウェイバリー通^りのウィザード^たち#91🈔
12:30~ウェイバリー通^りのウィザード^たち#92🈔
13:00~うわさのツイン^ズ リブとマディ^#23🈔
13:30~うわさのツイン^ズ リブとマディ
14:00~うわさのツイン^ズ リブとマディ^#24🈔
14:30~プーさんといっ^しょ#6🈔~#6「ランピーのお
15:00~ミッキーマウス^クラブハウス#5^0🈔~#50「ひみつのス
15:30~スティッチ！#2^1~#21「スティッチ^のサプライズパー
16:00~ブルーイ#9🈔~#9「こどもごっこ^/ ちょうちょごっ
16:30~ブルーイ#10🈔~#10「イタズラの
16:55~ミッキーマウ^ス！#38🈔~#38「トップ・ミ
17:00~マイロ・マーフ^ィーの法則#3,#^4🈔~#3「ドクター・ゾ^ーン・ファイル／^飛んでいった診断
18:00~101匹わんちゃん^ストリート#21
18:30~悪魔バスター★^スター・バタフ^ライ#77🈔~#77「二つの世
19:00~スイート・ライ^フ#17🈔~#17「はじめての^野球観戦」
19:30~スイート・ライ^フ#18🈔~#18「人生を切り^開け！」
20:00~ミラキュラス レ^ディバグ＆シャ
20:30~ミラキュラス レ^ディバグ＆シャ
21:00~フィニアスとフ^ァーブ#27🈔
21:30~ピクルスとピー^ナッツ#29🈔~#29「トラックド
22:00~モブサイコ100 II^I#5-6~#5「神樹2〜ピー^ス〜」神樹の内部^に入ったモブの前^に立ちはだかるテ^ル。モブはサイコ
23:00~SHIROBAKO#7-^8~#7「ネコでリテイ^ク」、#8「責めて^るんじゃないから^ね」5人の夢追う^女の子を中心に、^アニメ業界の日常^を描く群像劇。
24:00~ヒカルの碁#29-3^2~#29「第二十九局^桑原本因坊」ほ^か。祖父の家の蔵^で古い碁盤を見つ^けたことで、平安^時代の美丈夫、藤^原佐為と出会った^進藤ヒカル。突^如、佐為の魂がヒ^カルに宿り…。
26:00~モブサイコ100 II^I#5-6~#5「神樹2〜ピー^ス〜」神樹の内部^に入ったモブの前^に立ちはだかるテ^ル。モブはサイコ^ヘルメットの手先^となったテルをや^むを得ず沈黙させ^る／#6「神樹3〜^エクボは〜」
27:00~SHIROBAKO#5-^6~#5「人のせいにし^ているようなヤツ^は辞めちま^え！」、#6「イデ^ポン宮森 発動
28:00~ヒカルの碁#29-3^2~#29「第二十九局^桑原本因坊」ほ^か。祖父の家の蔵^で古い碁盤を見つ^けたことで、平安^時代の美丈夫、藤^原佐為と出会った`],
  ['J:COM BS', `5:00~${SHOP}~おうちでショッピ^ング！毎日選りす^ぐりの商品をご紹
5:30~中国◇独孤伽^羅〜皇后の願^い〜 ＃11 誘惑^の罠（字幕版）~愛のない婚姻から^運命を変える愛へ^――！ 乱世の^中、欲望と策略に^翻弄されながら
6:30~${SHOP}~おうちでショッピ
7:00~韓国◇キルミ^ー・ヒールミー^＃3 陽気な爆弾^男（字幕版）~チソン×ファン・^ジョンウムが共^演！記憶との“再^会”によって二人^に訪れる愛と癒し
8:00~${SHOP}~おうちでショッピ^ング！毎日選りす
8:30~リマーカブル・^リビング 「香川^県直島 現代アー
9:00~ふくあじ 福岡・^天神「レストラ^ン達」／大阪・^恵方町「寅竹 ラ
9:30~${SHOP}~おうちでショッピ
10:00~中国◇長安 賢后^伝 ＃44 君主の^務め（字幕版）~チョン・イー×チ^ャオ・インズ主^演！ひとりの女性^の波乱の生涯を描
11:00~${SHOP}~おうちでショッピ
11:30~韓国◇王は愛す^る ＃7（字幕^版）~イム・シワン×ユ^ナ＜少女時代＞×^ホン・ジョンヒョ
12:30~${SHOP}~おうちでショッピ
13:00~京都・女性記者^シリーズ15 京都^北陸殺人街道🈑~女性記者が様々な^難事件を解決して^いく大人気シリー^ズ！
15:00~${SHOP}~おうちでショッピ^ング！毎日選りす
15:30~韓国◇キルミ^ー・ヒールミー^＃4 炎からの救^出（字幕版）~チソン×ファン・^ジョンウムが共^演！記憶との“再^会”によって二人
16:30~${SHOP}~おうちでショッピ^ング！毎日選りす^ぐりの商品をご紹^介します。
17:00~中国◇独孤伽^羅〜皇后の願^い〜 ＃14 疲弊^した心（字幕^版）
18:00~${SHOP}
18:30~花吹雪美人スリ^三姉妹③ 砂風呂^の指ワザもよろ^しおすぇ！魅せ^ます指宿湯けむ^り艶姿~京都の美人スリ三^姉妹が事件解決へ^と導いていく大人^気シリーズ続編！
20:30~山ねずみロッキ^ーチャック ＃31
21:00~山ねずみロッキ^ーチャック ＃32
21:30~最近どう？ ＃30~吉幾三、山本譲^二、香西かおりの^3人による爆笑本
22:00~キイハンター ＃^121 地獄の待合^室から来た男🈑~元スパイの黒木、^津川、元新聞記者^の風間、スピード^狂の島らが所属す
23:00~韓国◇王は愛す^る ＃7（字幕^版）~イム・シワン×ユ^ナ＜少女時代＞×^ホン・ジョンヒョ^ン出演！高麗時代^を舞台に三人の男^女の甘く切ない愛
24:00~三食ごはん ＃7~韓国の人気俳優^イ・ソジンと2PM^のテギョンが自給^自足の田舎ライフ^を送るシリーズ第^1弾！
26:00~最近どう？ ＃86~吉幾三、山本譲^二、香西かおりの^3人による爆笑本^音トーク番組！
26:30~小泉孝太郎が女^子プロと本気^（マジ）ゴルフ
27:00~ふくあじ 東京・^八王子「インド
27:30~キイハンター ＃^27 殺しの招待旅^行🈑~元スパイの黒木、^津川、元新聞記者^の風間、スピード^狂の島らが所属す^る、国際警察の秘^密捜査グループで^あるキイハンター
28:30~こちらJ：COM^安心安全課 【＃^24】〜防災士`],
  ['ＢＳよしもと', `5:00~${SHOP}~【テレビショッピ^ング】をお送りし^ます。
5:30~🈑おはよう歌謡^曲 #94~この時間は厳選し^た歌謡曲をライン
6:00~お買い物情報~この時間は暮らし^に役立つお買い物^情報をお届けしま
6:30~🈢ウェザーニュ^ースLiVE~日本国内各地に設
7:00~お買い物情報~この時間は暮らし^に役立つお買い物^情報をお届けしま
7:30~🈑Y-Tube大賞^(3/10)~よしもと芸人のY^ouTubeチャンネ^ルの中から、おも^しろ動画を紹介し^ていくY-Tube大^賞！MCと一緒に^動画を見て楽しめ^ます！お気に入り
8:30~お買い物情報~この時間は暮らし^に役立つお買い物
9:00~🈑おはよう歌謡^曲 #89~この時間は厳選し^た歌謡曲をライン
9:30~お買い物情報~この時間は暮らし^に役立つお買い物^情報をお届けしま
10:00~🈑花王名人劇場^爆笑！！漫才 BI^G3~「花王名人劇場」^は昭和の漫才ブー^ムの火付け役にも^なった伝説的な番
11:00~お買い物情報~この時間は暮らし^に役立つお買い物
11:30~🈑ニコイチ出^張〜社員がカメ
12:00~お買い物情報~この時間は暮らし^に役立つお買い物
12:30~🈑笑い飯哲夫の^おもしろ社寺め^ぐり #204
13:00~🈢発信Live ジモ^トノチカラ！(3/^17)~日本全国の“ジモ^ト”の魅力をたっ^ぷりお届けする3^時間の生放送。^おススメスポッ^ト、グルメ、イベ^ントなどの情報を^47都道府県から^「住みます芸人」^が熱くレポー…
16:00~🈑🈞花月爆笑劇^場 社長騒動記~1974年から1989ま^で放送されていた^「うめだ花月」の^吉本新喜劇をお届^け！ 出演者：間^寛平、井上竜夫、^やなぎ浩二、 中^山美保、末成映
17:00~お買い物情報~この時間は暮らし^に役立つお買い物
17:30~🈑スナックコッ^トン #28
18:00~お買い物情報~この時間は暮らし
18:30~🈑笑い飯哲夫の^おもしろ社寺め^ぐり #205~笑い飯哲夫が奈良
19:00~🈢ショップチャ^ンネル(3/17) ス^ーパージーンズ^バイジョンブル~ファッション/国^内外の人気ブラン^ドや、知る人ぞ知^るこだわりのメー
20:00~🈑プラマヨ小杉^の「走れ！こす
20:30~🈑🈞よしもと新^喜劇(2018〜) 未^練たっぷり、マ^ッチングアプ^リ！？
21:30~お買い物情報~この時間は暮らし^に役立つお買い物^情報をお届けしま
22:00~🈑よしもと新喜^劇(2014〜) 茂造^のメイド喫茶で^萌え〜！~笑いどころ満載と^なっている「よし
23:00~お買い物情報~この時間は暮らし^に役立つお買い物
23:30~🈑Y-Tube大賞^(3/17)~よしもと芸人のY^ouTubeチャンネ^ルの中から、おも^しろ動画を紹介し^ていくY-Tube大^賞！MCと一緒に^動画を見て楽しめ^ます！お気に入り
24:25~🈑ガングリオン
24:30~🈑ふく太郎・ふ
24:45~テレビショッピ
25:00~${SHOP}
25:30~🈑ジモトに乾^杯！居酒屋 礼二
26:00~${SHOP}~【テレビショッピ^ング】をお送りし^ます。
26:30~発信Live ジモト^ノチカラ！(3/1^0)~日本全国の“ジモ^ト”の魅力をたっ^ぷりお届け！ お^ススメスポット、^グルメ、イベント^などの情報を47都^道府県から「住み^ます芸人」が熱く^レポートします。
28:30~ストイックOCT^PATH！ #9~今話題のボーイズ`],
]

const toLines = (text = '') => text.split('^').join('\n')

const channels: Channel[] = source.map(([name, body], index) => {
  const rows = body.split('\n').map((line) => {
    const [head, title, desc] = line.split('~')
    const flag = /[*+-]$/.test(head) ? head.slice(-1) : ''
    return { time: flag ? head.slice(0, -1) : head, flag, title, desc }
  })
  if (rows[0].time !== '4:00') rows.unshift({ time: '4:00', flag: '-', title: '', desc: '' })
  const programs = rows.map((row, i) => ({
    time: row.time,
    minute: row.time.split(':')[1],
    play: row.flag === '*' || row.flag === '+',
    missed: row.flag === '+',
    title: toLines(row.title),
    desc: toLines(row.desc),
    height: marks[i + 1 < rows.length ? rows[i + 1].time : END] - marks[row.time],
  }))
  return { name, color: palette[index % palette.length], programs }
})

const menu = [
  { label: 'ホーム', sub: false },
  { label: 'ランキング', sub: true },
  { label: 'タレント', sub: false },
  { label: 'ジャンル', sub: true },
  { label: '番組表', sub: true },
]
const filters = ['BS番組表', 'BS', '3月17日火曜日']
</script>

<template>
  <div class="page">
    <header class="top">
      <svg class="logo" viewBox="0 0 52 22" width="52" height="22">
        <path d="M26 3.2C20-.6 7 .2 2.2 6.4-2 12.600 4 19.500 13.500 20.300 18 20.700 22 20 24.500 19V9.500H15.500L14 12.500H18V16C12.500 17 7.500 14 8 9.800 8.500 5.500 15.500 2.500 26 3.200Z" fill="#f6c915" />
        <text x="26" y="20" textLength="23" lengthAdjust="spacingAndGlyphs">GUIDE</text>
      </svg>
      <span class="site">BS番組表</span>
      <div class="search">
        <svg viewBox="0 0 20 20" width="20" height="20" fill="none" stroke="#222">
          <circle cx="7.500" cy="7.500" r="5.500" stroke-width="2.300" />
          <path d="M11.800 12L18 18.500" stroke-width="3.200" />
        </svg>
        <span>番組名・タレント名を入力してください</span>
      </div>
    </header>

    <nav class="menu">
      <a v-for="item in menu" :key="item.label" class="menu-item">
        <span>{{ item.label }}</span>
        <i v-if="item.sub" class="tri"></i>
      </a>
    </nav>

    <div class="filters">
      <span v-for="(f, i) in filters" :key="f" class="filter" :class="'filter-' + i">
        {{ f }}
        <svg viewBox="0 0 10 7" width="10" height="7" fill="none" stroke="#111" stroke-width="2">
          <path d="M1 1L5 5.200L9 1" />
        </svg>
      </span>
    </div>

    <div class="day-link"><a class="button">前日の番組表を見る</a></div>

    <main class="table">
      <div class="hours">
        <div class="corner"></div>
        <div v-for="(h, i) in hours" :key="i" class="hour" :style="{ height: h.height + 'px', background: h.color }">
          {{ h.label }}
        </div>
      </div>
      <section v-for="(ch, ci) in channels" :key="ci" class="channel">
        <h2 class="name" :style="{ background: ch.color }">{{ ch.name }}</h2>
        <template v-for="p in ch.programs" :key="p.time">
          <div v-if="!p.title" class="gap" :style="{ height: p.height + 'px' }"></div>
          <article v-else class="program" :style="{ height: p.height + 'px' }">
            <div class="side">
              <span class="minute">{{ p.minute }}</span>
              <span v-if="p.play" class="play">
                <svg viewBox="0 0 14 14" width="14" height="14">
                  <circle cx="7" cy="7" r="6.500" fill="#fdf6ea" />
                  <path d="M5.300 3.900L10 7L5.300 10.100Z" fill="#e3a55c" />
                </svg>
              </span>
            </div>
            <div class="text">
              <h3>{{ p.title }}</h3>
              <span v-if="p.missed" class="missed">見逃し</span>
              <p v-if="p.desc">{{ p.desc }}</p>
            </div>
          </article>
        </template>
      </section>
    </main>

    <div class="spacer"><i></i></div>
    <div class="day-link bottom"><a class="button">翌日の番組表を見る</a></div>
    <footer class="foot">© 2017 IPG inc.</footer>
  </div>
</template>

<style>
html,
body {
  background: #fafafa;
}
</style>

<style scoped>
.page {
  width: 3782px;
  height: 3852px;
  overflow: hidden;
  background: #fafafa;
  font-family: 'Noto Sans', 'Noto Sans CJK JP', sans-serif;
  color: #333;
}
.page * {
  box-sizing: border-box;
}
.top {
  display: flex;
  align-items: flex-start;
  width: 1316px;
  height: 51px;
  background: #fff;
  padding-left: 20px;
}
.logo {
  margin-top: 17px;
}
.logo text {
  font: 700 13px 'Liberation Sans', sans-serif;
  fill: #f6c915;
}
.site {
  margin: 15px 0 0 11px;
  width: 78px;
  font-size: 14px;
  line-height: 21px;
  color: #444;
}
.search {
  display: flex;
  align-items: center;
  gap: 8px;
  width: 310px;
  height: 27px;
  margin-top: 12px;
  padding-left: 7px;
  border: 1px solid #ddd;
  border-radius: 4px;
  font-size: 12px;
  line-height: 24px;
  color: #777;
}
.search span {
  margin-top: -2px;
}
.menu {
  display: flex;
  width: 1316px;
  height: 33px;
  border-top: 1px solid #eee;
  border-bottom: 2px solid #ddd;
  background: #fafafa;
}
.menu-item {
  display: flex;
  align-items: center;
  justify-content: space-between;
  width: 126px;
  padding: 0 14px 0 22px;
  border-right: 1px solid #eee;
  font-size: 12px;
  line-height: 14px;
}
.menu-item span {
  border-left: 2px solid #8ab4ec;
  padding-left: 9px;
}
.tri {
  border: 5px solid transparent;
  border-top: 6px solid #bbb;
  border-bottom: 0;
}
.filters {
  display: flex;
  align-items: center;
  width: 1284px;
  height: 33px;
  padding-left: 36px;
  border-bottom: 2px solid #ddd;
  background: #f5f5f5;
  font-size: 13px;
  color: #000;
}
.filter {
  display: flex;
  align-items: center;
  justify-content: space-between;
}
.filter-0 {
  width: 81px;
  margin-right: 55px;
}
.filter-1 {
  width: 61px;
  margin-right: 23px;
}
.filter-2 {
  width: 100px;
}
.day-link {
  display: flex;
  justify-content: center;
  width: 1284px;
  height: 44px;
  padding-top: 6px;
  background: #f5f5f5;
}
.day-link.bottom {
  border-top: 1px solid #e4e4e4;
  border-bottom: 1px solid #e4e4e4;
}
.button {
  width: 400px;
  height: 31px;
  border-radius: 4px;
  background: #3478f5;
  color: #fff;
  font-size: 13px;
  line-height: 30px;
  text-align: center;
}
.table {
  display: flex;
}
.hours {
  width: 26px;
  color: #fff;
  font-size: 14px;
  text-align: center;
}
.corner {
  height: 34px;
  background: #2b3d73;
}
.hour {
  padding-top: 3px;
  line-height: 20px;
}
.channel {
  width: 139px;
}
.name {
  margin: 0;
  height: 34px;
  padding-left: 9px;
  font-size: 14px;
  font-weight: 400;
  line-height: 33px;
  color: #fff;
  white-space: nowrap;
  overflow: hidden;
}
.program {
  display: flex;
  overflow: hidden;
  background: #c6c9e0;
  border-top: 1px solid #dfe1ef;
  border-left: 1px solid #dfe1ef;
}
.side {
  flex: none;
  width: 22px;
}
.minute,
.play {
  display: flex;
  align-items: center;
  justify-content: center;
  width: 22px;
  height: 16px;
  background: #8491b4;
  color: #fff;
  font-size: 12px;
}
.play {
  height: 21px;
  background: #e3a55c;
}
.text {
  position: relative;
  width: 98px;
  margin: 0 0 8px 8px;
  padding-top: 3px;
  overflow: hidden;
}
.text::after {
  content: '';
  position: absolute;
  left: 0;
  right: 0;
  bottom: 0;
  height: 8px;
  background: linear-gradient(rgba(198, 201, 224, 0), rgba(198, 201, 224, 0.9));
}
.text h3 {
  margin: 0;
  font-size: 13px;
  font-weight: 700;
  line-height: 18px;
  color: #4a5578;
  white-space: pre;
}
.missed {
  display: block;
  height: 19px;
  margin-top: 5px;
  background: #e3a55c;
  color: #fff;
  font-size: 12px;
  line-height: 18px;
  text-align: center;
}
.text p {
  margin: 5px 0 0;
  font-size: 12px;
  line-height: 15px;
  color: #757b98;
  white-space: pre;
}
.spacer {
  width: 1284px;
  height: 50px;
}
.spacer i {
  display: block;
  width: 31px;
  height: 50px;
  background: #fff;
}
.foot {
  width: 1284px;
  height: 130px;
  padding: 10px 0 0 31px;
  background: #fff;
  font-size: 13px;
  line-height: 20px;
  color: #777;
}
</style>
